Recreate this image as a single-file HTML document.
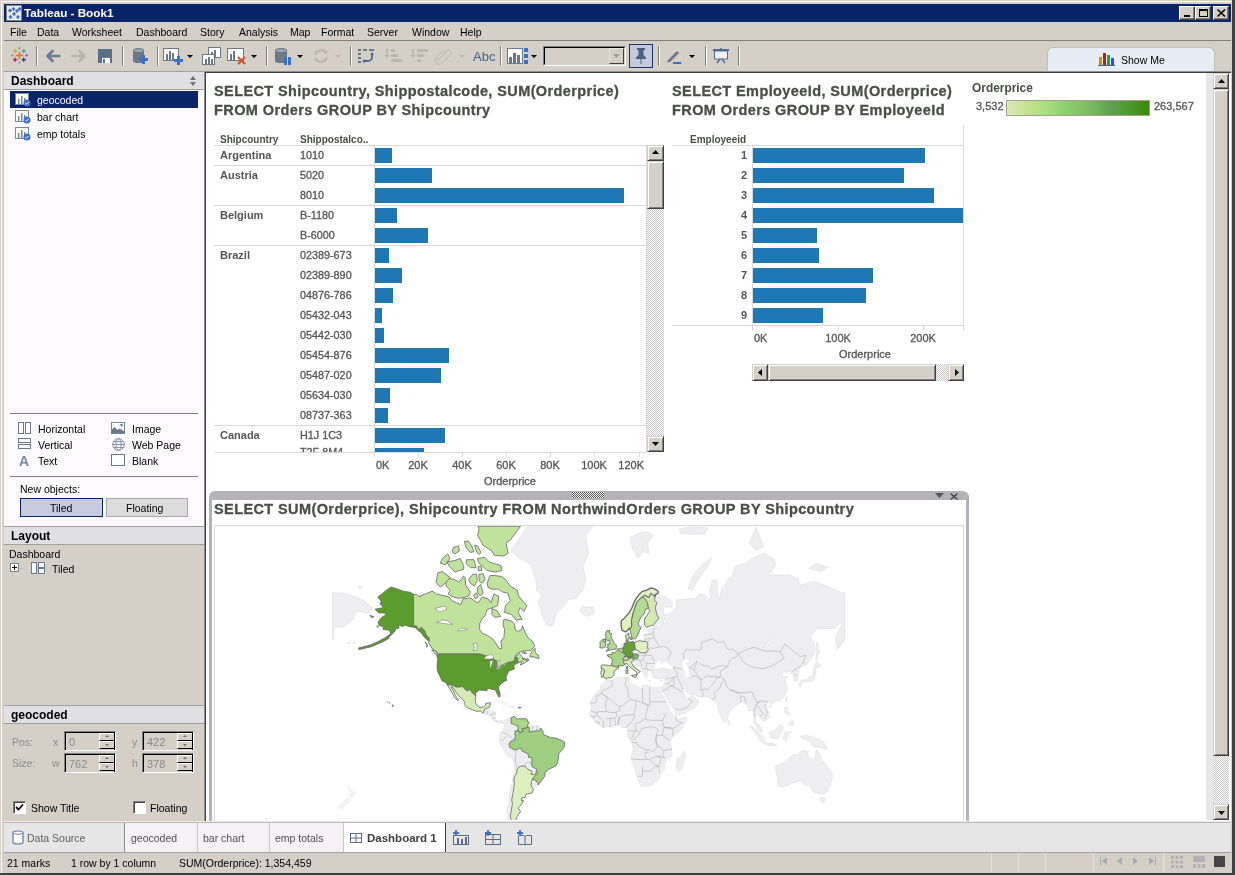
<!DOCTYPE html>
<html><head><meta charset="utf-8">
<style>
*{margin:0;padding:0;box-sizing:border-box}
html,body{will-change:transform;width:1235px;height:875px;overflow:hidden;background:#d4d0c8;font-family:"Liberation Sans",sans-serif;font-size:10.5px;color:#000}
.a{position:absolute}
.t{position:absolute;white-space:nowrap;line-height:1}
svg{position:absolute;overflow:visible}
#title{left:4px;top:4px;width:1227px;height:18px;background:#0a246a}
.wb{position:absolute;top:2px;width:16px;height:14px;background:#d4d0c8;border-top:1px solid #fff;border-left:1px solid #fff;border-right:1px solid #404040;border-bottom:1px solid #404040;box-shadow:inset -1px -1px 0 #808080}
.sep{position:absolute;top:46px;width:2px;height:20px;border-left:1px solid #808080;border-right:1px solid #fff}
.hdr{position:absolute;left:4px;width:200px;height:19px;background:#e0dfe3;border-top:1px solid #a0a0a0;border-bottom:1px solid #a0a0a0}
.hdr span{position:absolute;left:7px;top:3px;font-weight:bold;font-size:12px;line-height:1}
.tab{position:absolute;top:823px;height:29px;border-right:1px solid #c8c8c8;background:#f5f1f5;color:#505050}
.tab span{position:absolute;top:10px;line-height:1;white-space:nowrap}
.inp{position:absolute;width:52px;height:20px;background:#d4d0c8;border-top:1px solid #808080;border-left:1px solid #808080;border-right:1px solid #fff;border-bottom:1px solid #fff;color:#8a8a8a}
.inp:before{content:"";position:absolute;left:0;top:0;right:0;bottom:0;border-top:1px solid #000;border-left:1px solid #000;border-right:1px solid #000}
.inp span{position:absolute;left:4px;top:5px;line-height:1;font-size:11px}
.spin{position:absolute;left:34px;top:1px;width:15px;height:16px}
.spin:before,.spin:after{content:"";position:absolute;left:0;width:15px;height:8px;box-sizing:border-box;border-top:1px solid #fff;border-left:1px solid #fff;border-bottom:1px solid #000;background:#d4d0c8}
.spin:before{top:0}.spin:after{top:8px}
.spin i{position:absolute;left:6px;width:0;height:0;border-left:2px solid transparent;border-right:2px solid transparent;z-index:1}
.spin i.u{top:2px;border-bottom:2px solid #707070}.spin i.d{top:11px;border-top:2px solid #707070}
.sbb{position:absolute;background:#d4d0c8;border-top:1px solid #d4d0c8;border-left:1px solid #d4d0c8;border-right:1px solid #404040;border-bottom:1px solid #404040;box-shadow:inset 1px 1px 0 #fff,inset -1px -1px 0 #808080}
.gl{position:absolute;color:#8c8c8c;line-height:1;white-space:nowrap}
</style></head><body>
<!-- window frame -->
<div class="a" style="left:0;top:0;width:1235px;height:875px;background:#d4d0c8;border-top:1px solid #d4d0c8;border-left:1px solid #d4d0c8;"></div>
<div class="a" style="left:1px;top:1px;width:1233px;height:873px;border-top:1px solid #fff;border-left:1px solid #fff;border-right:1px solid #808080;border-bottom:1px solid #808080"></div>
<div class="a" style="left:1232px;top:0;width:3px;height:875px;background:#404040"></div>
<div class="a" style="left:0;top:873px;width:1235px;height:2px;background:#404040"></div>

<!-- title bar -->
<div id="title" class="a">
  <div class="a" style="left:2px;top:1px;width:16px;height:16px;background:#e8e8e8;border:1px solid #808080"></div>
  <svg style="left:3px;top:2px" width="14" height="14" viewBox="0 0 14 14"><rect x="1.2" y="3.9" width="3.6" height="1.2" fill="#1f5fc8"/><rect x="2.4" y="2.7" width="1.2" height="3.6" fill="#1f5fc8"/><rect x="4.7" y="2.4" width="3.6" height="1.2" fill="#1f5fc8"/><rect x="5.9" y="1.2" width="1.2" height="3.6" fill="#1f5fc8"/><rect x="8.2" y="4.4" width="3.6" height="1.2" fill="#1f5fc8"/><rect x="9.4" y="3.2" width="1.2" height="3.6" fill="#1f5fc8"/><rect x="10.7" y="2.4" width="3.6" height="1.2" fill="#1f5fc8"/><rect x="11.9" y="1.2" width="1.2" height="3.6" fill="#1f5fc8"/><rect x="5.2" y="7.4" width="3.6" height="1.2" fill="#1f5fc8"/><rect x="6.4" y="6.2" width="1.2" height="3.6" fill="#1f5fc8"/><rect x="1.7" y="10.4" width="3.6" height="1.2" fill="#1f5fc8"/><rect x="2.9" y="9.2" width="1.2" height="3.6" fill="#1f5fc8"/><rect x="9.2" y="10.4" width="3.6" height="1.2" fill="#1f5fc8"/><rect x="10.4" y="9.2" width="1.2" height="3.6" fill="#1f5fc8"/></svg>
  <div class="t" style="left:20px;top:3px;color:#fff;font-weight:bold;font-size:11.7px">Tableau - Book1</div>
  <div class="wb" style="left:1175px"><div class="a" style="left:4px;top:8px;width:6px;height:2px;background:#000"></div></div>
  <div class="wb" style="left:1191px"><div class="a" style="left:3px;top:2px;width:9px;height:8px;border:1px solid #000;border-top-width:2px"></div></div>
  <div class="wb" style="left:1209px"><svg style="left:3px;top:2px" width="9" height="8" viewBox="0 0 9 8"><path d="M0.5 0.5L8 7.5M8 0.5L0.5 7.5" stroke="#000" stroke-width="1.6"/></svg></div>
</div>

<!-- menu -->
<div class="t" style="left:10px;top:27px">File</div>
<div class="t" style="left:37px;top:27px">Data</div>
<div class="t" style="left:72px;top:27px">Worksheet</div>
<div class="t" style="left:136px;top:27px">Dashboard</div>
<div class="t" style="left:200px;top:27px">Story</div>
<div class="t" style="left:239px;top:27px">Analysis</div>
<div class="t" style="left:290px;top:27px">Map</div>
<div class="t" style="left:321px;top:27px">Format</div>
<div class="t" style="left:367px;top:27px">Server</div>
<div class="t" style="left:412px;top:27px">Window</div>
<div class="t" style="left:460px;top:27px">Help</div>
<div class="a" style="left:4px;top:40px;width:1227px;height:1px;background:#808080"></div>

<!-- toolbar placeholder -->
<!-- tableau logo -->
<svg style="left:10px;top:46px" width="19" height="19" viewBox="0 0 19 19"><rect x="5.8" y="8.55" width="7.2" height="1.7" fill="#e8762d"/><rect x="8.55" y="5.8" width="1.7" height="7.2" fill="#e8762d"/><rect x="2.9" y="4.45" width="4.4" height="1.3" fill="#eb9a38"/><rect x="4.45" y="2.9" width="1.3" height="4.4" fill="#eb9a38"/><rect x="11.5" y="4.45" width="4.4" height="1.3" fill="#5b97a8"/><rect x="13.05" y="2.9" width="1.3" height="4.4" fill="#5b97a8"/><rect x="2.9" y="13.05" width="4.4" height="1.3" fill="#c72037"/><rect x="4.45" y="11.5" width="1.3" height="4.4" fill="#c72037"/><rect x="11.5" y="13.05" width="4.4" height="1.3" fill="#1f447e"/><rect x="13.05" y="11.5" width="1.3" height="4.4" fill="#1f447e"/><rect x="8" y="1.7" width="2.8" height="1" fill="#7ba3b0"/><rect x="8.9" y="0.8" width="1" height="2.8" fill="#7ba3b0"/><rect x="8" y="16.1" width="2.8" height="1" fill="#9aa0c8"/><rect x="8.9" y="15.2" width="1" height="2.8" fill="#9aa0c8"/><rect x="0.8" y="8.9" width="2.8" height="1" fill="#7ba3b0"/><rect x="1.7" y="8" width="1" height="2.8" fill="#7ba3b0"/><rect x="15.2" y="8.9" width="2.8" height="1" fill="#6a6ea0"/><rect x="16.1" y="8" width="1" height="2.8" fill="#6a6ea0"/></svg>
<div class="sep" style="left:36px"></div>
<svg style="left:45px;top:49px" width="16" height="14" viewBox="0 0 16 14"><path d="M14.5 7H3M7.5 2L2.5 7l5 5" stroke="#6a7d92" stroke-width="2.6" fill="none" stroke-linecap="round" stroke-linejoin="round"/></svg>
<svg style="left:71px;top:49px" width="16" height="14" viewBox="0 0 16 14"><path d="M1.5 7H13M8.5 2l5 5-5 5" stroke="#b8b4ac" stroke-width="2.6" fill="none" stroke-linecap="round" stroke-linejoin="round"/></svg>
<svg style="left:98px;top:49px" width="14" height="14" viewBox="0 0 14 14"><rect x="0" y="0" width="14" height="14" fill="#5a6e86"/><rect x="4" y="9" width="8" height="5" fill="#fff"/><rect x="5" y="10" width="2" height="4" fill="#5a6e86"/></svg>
<div class="sep" style="left:122px"></div>
<svg style="left:133px;top:48px" width="15" height="17" viewBox="0 0 15 17"><path d="M0 2.5Q0 0 5.5 0Q11 0 11 2.5V13Q11 15 5.5 15Q0 15 0 13Z" fill="#6a7888"/><ellipse cx="5.5" cy="2.5" rx="4.5" ry="1.6" fill="#9aa6b4"/><path d="M9 7h3v3h3v3h-3v3H9v-3H6v-3h3z" fill="#3a6fc4"/></svg>
<div class="sep" style="left:157px"></div>
<svg style="left:163px;top:48px" width="21" height="17" viewBox="0 0 21 17"><rect x="0.5" y="0.5" width="15" height="12" fill="#fff" stroke="#6a7888"/><rect x="3" y="6" width="2" height="6" fill="#6a7888"/><rect x="6" y="3" width="2" height="9" fill="#6a7888"/><rect x="9" y="5" width="2" height="7" fill="#6a7888"/><path d="M14 8h3v3h3v3h-3v3h-3v-3h-3v-3h3z" fill="#3a6fc4"/></svg>
<svg style="left:187px;top:55px" width="6" height="3" viewBox="0 0 6 3"><path d="M0 0h6L3 3z" fill="#000"/></svg>
<svg style="left:202px;top:47px" width="19" height="18" viewBox="0 0 19 18"><rect x="6.5" y="0.5" width="12" height="10" fill="#fff" stroke="#6a7888"/><rect x="9" y="5" width="2" height="5" fill="#6a7888"/><rect x="12" y="3" width="2" height="7" fill="#6a7888"/><rect x="0.5" y="7.5" width="12" height="10" fill="#fff" stroke="#6a7888"/><rect x="3" y="12" width="2" height="5" fill="#6a7888"/><rect x="6" y="10" width="2" height="7" fill="#6a7888"/><rect x="9" y="12" width="2" height="5" fill="#6a7888"/></svg>
<svg style="left:227px;top:48px" width="20" height="17" viewBox="0 0 20 17"><rect x="0.5" y="0.5" width="16" height="12" fill="#fff" stroke="#6a7888"/><rect x="3" y="6" width="2" height="6" fill="#6a7888"/><rect x="6" y="3" width="2" height="9" fill="#6a7888"/><path d="M11 9l7 7M18 9l-7 7" stroke="#d0502a" stroke-width="2"/></svg>
<svg style="left:251px;top:55px" width="6" height="3" viewBox="0 0 6 3"><path d="M0 0h6L3 3z" fill="#000"/></svg>
<div class="sep" style="left:266px"></div>
<svg style="left:275px;top:48px" width="17" height="17" viewBox="0 0 17 17"><path d="M0 2.5Q0 0 6 0Q12 0 12 2.5V13Q12 15 6 15Q0 15 0 13Z" fill="#6a7888"/><ellipse cx="6" cy="2.5" rx="5" ry="1.6" fill="#9aa6b4"/><rect x="9" y="9" width="3" height="8" fill="#3a6fc4"/><rect x="13" y="9" width="3" height="8" fill="#3a6fc4"/></svg>
<svg style="left:297px;top:55px" width="6" height="3" viewBox="0 0 6 3"><path d="M0 0h6L3 3z" fill="#000"/></svg>
<svg style="left:313px;top:48px" width="16" height="16" viewBox="0 0 16 16"><path d="M2.5 7A5.5 5.5 0 0 1 12.5 4.5M13.5 9A5.5 5.5 0 0 1 3.5 11.5" stroke="#bcb8b0" stroke-width="2.4" fill="none"/><path d="M10 2l4.5 1-1 4.5zM6 14l-4.5-1 1-4.5z" fill="#bcb8b0"/></svg>
<svg style="left:335px;top:55px" width="6" height="3" viewBox="0 0 6 3"><path d="M0 0h6L3 3z" fill="#bcb8b0"/></svg>
<div class="sep" style="left:350px"></div>
<svg style="left:358px;top:49px" width="17" height="16" viewBox="0 0 17 16"><g fill="#6a7888"><rect x="0" y="0" width="3" height="2"/><rect x="5" y="0" width="4" height="2"/><rect x="11" y="0" width="5" height="2"/><rect x="0" y="4" width="3" height="2"/><rect x="0" y="8" width="3" height="2"/><rect x="0" y="12" width="3" height="2"/></g><path d="M14 5v3a4 4 0 0 1-4 4H6" stroke="#4a6a96" stroke-width="1.8" fill="none"/><path d="M12 6l2-3 2 3zM7 10l-3 2 3 2z" fill="#4a6a96"/></svg>
<svg style="left:384px;top:49px" width="19" height="15" viewBox="0 0 19 15"><g fill="#bcb8b0"><rect x="7" y="0" width="4" height="3"/><rect x="7" y="5" width="7" height="3"/><rect x="7" y="10" width="11" height="3"/><path d="M2 0h2v6h2L3 9 0 6h2z"/></g></svg>
<svg style="left:410px;top:49px" width="19" height="15" viewBox="0 0 19 15"><g fill="#bcb8b0"><rect x="7" y="0" width="11" height="3"/><rect x="7" y="5" width="7" height="3"/><rect x="7" y="10" width="4" height="3"/><path d="M2 0h2v6h2L3 9 0 6h2z"/></g></svg>
<svg style="left:435px;top:49px" width="17" height="15" viewBox="0 0 17 15"><path d="M3 12L13 2a2.5 2.5 0 0 1 3.5 3.5L7 15a4 4 0 0 1-5.5-5.5L10 1" stroke="#c4c0b8" stroke-width="1.3" fill="none" transform="translate(-0.5,-0.5)"/></svg>
<svg style="left:459px;top:55px" width="6" height="3" viewBox="0 0 6 3"><path d="M0 0h6L3 3z" fill="#bcb8b0"/></svg>
<div class="t" style="left:473px;top:50px;color:#4a6080;font-size:13px">Abc</div>
<div class="sep" style="left:500px"></div>
<svg style="left:507px;top:48px" width="21" height="16" viewBox="0 0 21 16"><rect x="0.5" y="0.5" width="15" height="15" fill="#fff" stroke="#6a7888"/><rect x="2" y="9" width="3" height="6" fill="#6a7888"/><rect x="6" y="5" width="3" height="10" fill="#6a7888"/><rect x="10" y="7" width="3" height="8" fill="#6a7888"/><g fill="#3a6fc4"><rect x="17" y="0" width="4" height="4"/><rect x="17" y="6" width="4" height="4"/><rect x="17" y="12" width="4" height="4"/></g></svg>
<svg style="left:531px;top:55px" width="6" height="3" viewBox="0 0 6 3"><path d="M0 0h6L3 3z" fill="#000"/></svg>
<!-- combo -->
<div class="a" style="left:543px;top:46px;width:83px;height:20px;background:#d4d0c8;border-top:1px solid #808080;border-left:1px solid #808080;border-right:1px solid #fff;border-bottom:1px solid #fff"></div>
<div class="a" style="left:544px;top:47px;width:81px;height:18px;border-top:1px solid #000;border-left:1px solid #000;border-right:1px solid #d4d0c8;border-bottom:1px solid #d4d0c8"></div>
<div class="a" style="left:609px;top:48px;width:15px;height:16px;background:#d4d0c8;border-top:1px solid #e4e4e4;border-left:1px solid #e4e4e4;border-right:1px solid #404040;border-bottom:1px solid #404040"></div>
<svg style="left:613px;top:54px" width="7" height="4" viewBox="0 0 7 4"><path d="M0 0h7L3.5 4z" fill="#a0a0a0"/></svg>
<!-- pin -->
<div class="a" style="left:629px;top:44px;width:24px;height:24px;background:#c4cadc;border:1px solid #1a3070"></div>
<svg style="left:634px;top:48px" width="14" height="16" viewBox="0 0 14 16"><path d="M3 0h8v2H9.5v5l2.5 2.5V11H2V9.5L4.5 7V2H3z" fill="#4a6080"/><rect x="6.5" y="11" width="1" height="5" fill="#4a6080"/></svg>
<div class="sep" style="left:658px"></div>
<svg style="left:666px;top:49px" width="17" height="15" viewBox="0 0 17 15"><path d="M2 11L11 2l2 2-9 9-3 0.5z" fill="#6a7888"/><rect x="7" y="13" width="8" height="2" fill="#3a6fc4"/></svg>
<svg style="left:689px;top:55px" width="6" height="3" viewBox="0 0 6 3"><path d="M0 0h6L3 3z" fill="#000"/></svg>
<div class="sep" style="left:705px"></div>
<svg style="left:713px;top:48px" width="16" height="16" viewBox="0 0 16 16"><rect x="0" y="1" width="16" height="2" fill="#4a6a96"/><rect x="1.5" y="3" width="13" height="8" fill="#f4f0f4" stroke="#4a6a96"/><path d="M8 1V0M4 15l3-4M12 15l-3-4" stroke="#4a6a96" stroke-width="1.4"/></svg>
<div class="sep" style="left:738px"></div>


<!-- Show Me tab -->
<div class="a" style="left:1047px;top:47px;width:168px;height:25px;background:#e6edf5;border:1px solid #b9c4b9;border-bottom:none;border-radius:6px 6px 0 0"></div>
<svg style="left:1098px;top:53px" width="18" height="13" viewBox="0 0 18 13"><rect x="1" y="4" width="3" height="8" fill="#c8901a"/><rect x="5" y="0" width="3" height="12" fill="#a02a0a"/><rect x="9" y="2" width="3" height="10" fill="#2aa02a"/><rect x="13" y="5" width="3" height="7" fill="#2a4aff"/><rect x="0" y="12" width="17" height="1" fill="#506080"/></svg>
<div class="t" style="left:1121px;top:55px">Show Me</div>

<!-- left panel -->
<div class="hdr" style="top:71px"><span>Dashboard</span></div>
<svg style="left:190px;top:76px" width="6" height="10" viewBox="0 0 6 10"><path d="M0 4h6L3 0zM0 6h6L3 10z" fill="#707070"/></svg>
<div class="a" style="left:4px;top:90px;width:200px;height:436px;background:#fdfafd"></div>
<div class="a" style="left:10px;top:91px;width:188px;height:17px;background:#0a246a"></div>
<!-- sheet icons -->
<svg style="left:15px;top:93px" width="16" height="14" viewBox="0 0 16 14"><rect x="0.5" y="0.5" width="13" height="11" fill="#fff" stroke="#7a8898"/><rect x="3" y="6" width="1.5" height="5.5" fill="#7a8898"/><rect x="6" y="3" width="1.5" height="8.5" fill="#7a8898"/><rect x="9" y="5" width="1.5" height="6.5" fill="#7a8898"/><circle cx="12" cy="10" r="3.5" fill="#3a70c8"/><path d="M10.3 10l1.2 1.2 2.2-2.4" stroke="#fff" stroke-width="1" fill="none"/></svg>
<svg style="left:15px;top:110px" width="16" height="14" viewBox="0 0 16 14"><rect x="0.5" y="0.5" width="13" height="11" fill="#fff" stroke="#7a8898"/><rect x="3" y="6" width="1.5" height="5.5" fill="#7a8898"/><rect x="6" y="3" width="1.5" height="8.5" fill="#7a8898"/><rect x="9" y="5" width="1.5" height="6.5" fill="#7a8898"/><circle cx="12" cy="10" r="3.5" fill="#3a70c8"/><path d="M10.3 10l1.2 1.2 2.2-2.4" stroke="#fff" stroke-width="1" fill="none"/></svg>
<svg style="left:15px;top:127px" width="16" height="14" viewBox="0 0 16 14"><rect x="0.5" y="0.5" width="13" height="11" fill="#fff" stroke="#7a8898"/><rect x="3" y="6" width="1.5" height="5.5" fill="#7a8898"/><rect x="6" y="3" width="1.5" height="8.5" fill="#7a8898"/><rect x="9" y="5" width="1.5" height="6.5" fill="#7a8898"/><circle cx="12" cy="10" r="3.5" fill="#3a70c8"/><path d="M10.3 10l1.2 1.2 2.2-2.4" stroke="#fff" stroke-width="1" fill="none"/></svg>
<div class="t" style="left:37px;top:95px;color:#fff">geocoded</div>
<div class="t" style="left:37px;top:112px">bar chart</div>
<div class="t" style="left:37px;top:129px">emp totals</div>
<div class="a" style="left:10px;top:413px;width:188px;height:1px;background:#808080"></div>
<!-- objects -->
<svg style="left:18px;top:422px" width="14" height="12" viewBox="0 0 14 12"><rect x="0.5" y="0.5" width="5" height="11" fill="none" stroke="#6a7888"/><rect x="7.5" y="0.5" width="5" height="11" fill="none" stroke="#6a7888"/></svg>
<svg style="left:18px;top:438px" width="14" height="12" viewBox="0 0 14 12"><rect x="0.5" y="0.5" width="12" height="4" fill="none" stroke="#6a7888"/><rect x="0.5" y="6.5" width="12" height="4" fill="none" stroke="#6a7888"/></svg>
<div class="t" style="left:19px;top:454px;color:#7a8898;font-weight:bold;font-size:14px">A</div>
<div class="t" style="left:38px;top:424px">Horizontal</div>
<div class="t" style="left:38px;top:440px">Vertical</div>
<div class="t" style="left:38px;top:456px">Text</div>
<svg style="left:111px;top:422px" width="14" height="12" viewBox="0 0 14 12"><rect x="0" y="0" width="14" height="12" fill="#fff" stroke="#7a8898" stroke-width="0"/><rect x="0.5" y="0.5" width="13" height="11" fill="none" stroke="#7a8898"/><path d="M0.5 11.5V8l3-3 3 3 2-1.5 5 3v2z" fill="#6a7888"/><circle cx="10.5" cy="3" r="1.2" fill="#3a70c8"/></svg>
<svg style="left:112px;top:438px" width="13" height="13" viewBox="0 0 13 13"><g fill="none" stroke="#7a8898" stroke-width="0.9"><circle cx="6.5" cy="6.5" r="5.8"/><ellipse cx="6.5" cy="6.5" rx="2.6" ry="5.8"/><path d="M0.7 6.5h11.6M1.6 3.6h9.8M1.6 9.4h9.8"/></g></svg>
<svg style="left:111px;top:454px" width="14" height="12" viewBox="0 0 14 12"><rect x="0.5" y="0.5" width="13" height="11" fill="#fff" stroke="#6a7888"/></svg>
<div class="t" style="left:132px;top:424px">Image</div>
<div class="t" style="left:132px;top:440px">Web Page</div>
<div class="t" style="left:132px;top:456px">Blank</div>
<div class="a" style="left:10px;top:476px;width:188px;height:1px;background:#808080"></div>
<div class="t" style="left:20px;top:484px">New objects:</div>
<div class="a" style="left:20px;top:498px;width:83px;height:19px;background:#c6cbdd;border:1px solid #0a246a"></div>
<div class="t" style="left:50px;top:503px">Tiled</div>
<div class="a" style="left:106px;top:498px;width:82px;height:19px;background:#dcdcdc;border:1px solid #a8a8a8"></div>
<div class="t" style="left:126px;top:503px">Floating</div>

<div class="hdr" style="top:526px"><span>Layout</span></div>
<div class="t" style="left:9px;top:549px">Dashboard</div>
<div class="a" style="left:10px;top:563px;width:9px;height:9px;border:1px solid #808080;background:#fff"></div>
<div class="a" style="left:12px;top:567px;width:5px;height:1px;background:#000"></div>
<div class="a" style="left:14px;top:565px;width:1px;height:5px;background:#000"></div>
<div class="a" style="left:14px;top:560px;width:1px;height:3px;border-left:1px dotted #a0a0a0"></div>
<div class="a" style="left:20px;top:568px;width:3px;height:1px;border-top:1px dotted #a0a0a0"></div>
<svg style="left:31px;top:562px" width="14" height="12" viewBox="0 0 14 12"><rect x="0.5" y="0.5" width="5" height="11" fill="#fff" stroke="#6a7888"/><rect x="7.5" y="0.5" width="6" height="5" fill="#fff" stroke="#6a7888"/><rect x="7.5" y="6.5" width="6" height="5" fill="#fff" stroke="#6a7888"/></svg>
<div class="t" style="left:52px;top:564px">Tiled</div>

<div class="hdr" style="top:705px"><span>geocoded</span></div>
<div class="gl" style="left:12px;top:737px">Pos:</div>
<div class="gl" style="left:53px;top:737px">x</div>
<div class="inp" style="left:64px;top:731px"><span>0</span><div class="spin"><i class="u"></i><i class="d"></i></div></div>
<div class="gl" style="left:132px;top:737px">y</div>
<div class="inp" style="left:142px;top:731px"><span>422</span><div class="spin"><i class="u"></i><i class="d"></i></div></div>
<div class="gl" style="left:12px;top:758px">Size:</div>
<div class="gl" style="left:52px;top:758px">w</div>
<div class="inp" style="left:64px;top:753px"><span>762</span><div class="spin"><i class="u"></i><i class="d"></i></div></div>
<div class="gl" style="left:132px;top:758px">h</div>
<div class="inp" style="left:142px;top:753px"><span>378</span><div class="spin"><i class="u"></i><i class="d"></i></div></div>
<div class="a" style="left:13px;top:801px;width:13px;height:13px;background:#fff;border-top:1px solid #808080;border-left:1px solid #808080;border-right:1px solid #fff;border-bottom:1px solid #fff;box-shadow:inset 1px 1px 0 #404040"></div>
<svg style="left:15px;top:803px" width="9" height="9" viewBox="0 0 9 9"><path d="M1 4l2.5 2.5L8 1.5" stroke="#000" stroke-width="1.8" fill="none"/></svg>
<div class="t" style="left:31px;top:803px">Show Title</div>
<div class="a" style="left:133px;top:801px;width:13px;height:13px;background:#fff;border-top:1px solid #808080;border-left:1px solid #808080;border-right:1px solid #fff;border-bottom:1px solid #fff;box-shadow:inset 1px 1px 0 #404040"></div>
<div class="t" style="left:150px;top:803px">Floating</div>



<!-- canvas -->
<div class="a" style="left:205px;top:72px;width:1026px;height:750px;background:#fff;border-left:1px solid #404040;border-top:1px solid #404040"></div><div class="a" style="left:204px;top:71px;width:1027px;height:1px;background:#909090"></div><div class="a" style="left:204px;top:71px;width:1px;height:751px;background:#909090"></div>
<div id="charts"><style>.ti{position:absolute;white-space:nowrap;line-height:1;font-weight:bold;font-size:14.5px;letter-spacing:0.4px;color:#4a4f49;-webkit-text-stroke:0.3px #4a4f49}.hd{position:absolute;white-space:nowrap;line-height:1;font-weight:bold;font-size:10px;color:#4a4f49}.rl{position:absolute;white-space:nowrap;line-height:1;font-weight:bold;font-size:11px;color:#555}.pl{position:absolute;white-space:nowrap;line-height:1;font-size:10.8px;color:#555;-webkit-text-stroke:0.3px #555}.ax{position:absolute;white-space:nowrap;line-height:1;font-size:11px;color:#555;-webkit-text-stroke:0.3px #555}.bar{position:absolute;background:#1f77b4;height:15px}.hl{position:absolute;height:1px;background:#d9d9d9}.vl{position:absolute;width:1px;background:#d9d9d9}</style>
<div class="ti" style="left:214px;top:84px">SELECT Shipcountry, Shippostalcode, SUM(Orderprice)</div>
<div class="ti" style="left:214px;top:103px">FROM Orders GROUP BY Shipcountry</div>
<div class="hd" style="left:220px;top:135px">Shipcountry</div>
<div class="hd" style="left:300px;top:135px">Shippostalco..</div>
<div class="hl" style="left:214px;top:145px;width:432px"></div>
<div class="a" style="left:214px;top:146px;width:432px;height:306px;overflow:hidden">
<div class="rl" style="left:6px;top:4px">Argentina</div>
<div class="pl" style="left:86px;top:4px">1010</div>
<div class="bar" style="left:161px;top:2px;width:17px"></div>
<div class="hl" style="left:0;top:19px;width:432px"></div>
<div class="rl" style="left:6px;top:24px">Austria</div>
<div class="pl" style="left:86px;top:24px">5020</div>
<div class="bar" style="left:161px;top:22px;width:57px"></div>
<div class="pl" style="left:86px;top:44px">8010</div>
<div class="bar" style="left:161px;top:42px;width:249px"></div>
<div class="hl" style="left:0;top:59px;width:432px"></div>
<div class="rl" style="left:6px;top:64px">Belgium</div>
<div class="pl" style="left:86px;top:64px">B-1180</div>
<div class="bar" style="left:161px;top:62px;width:22px"></div>
<div class="pl" style="left:86px;top:84px">B-6000</div>
<div class="bar" style="left:161px;top:82px;width:53px"></div>
<div class="hl" style="left:0;top:99px;width:432px"></div>
<div class="rl" style="left:6px;top:104px">Brazil</div>
<div class="pl" style="left:86px;top:104px">02389-673</div>
<div class="bar" style="left:161px;top:102px;width:14px"></div>
<div class="pl" style="left:86px;top:124px">02389-890</div>
<div class="bar" style="left:161px;top:122px;width:27px"></div>
<div class="pl" style="left:86px;top:144px">04876-786</div>
<div class="bar" style="left:161px;top:142px;width:18px"></div>
<div class="pl" style="left:86px;top:164px">05432-043</div>
<div class="bar" style="left:161px;top:162px;width:7px"></div>
<div class="pl" style="left:86px;top:184px">05442-030</div>
<div class="bar" style="left:161px;top:182px;width:9px"></div>
<div class="pl" style="left:86px;top:204px">05454-876</div>
<div class="bar" style="left:161px;top:202px;width:74px"></div>
<div class="pl" style="left:86px;top:224px">05487-020</div>
<div class="bar" style="left:161px;top:222px;width:66px"></div>
<div class="pl" style="left:86px;top:244px">05634-030</div>
<div class="bar" style="left:161px;top:242px;width:15px"></div>
<div class="pl" style="left:86px;top:264px">08737-363</div>
<div class="bar" style="left:161px;top:262px;width:13px"></div>
<div class="hl" style="left:0;top:279px;width:432px"></div>
<div class="rl" style="left:6px;top:284px">Canada</div>
<div class="pl" style="left:86px;top:284px">H1J 1C3</div>
<div class="bar" style="left:161px;top:282px;width:70px"></div>
<div class="pl" style="left:86px;top:301px">T2F 8M4</div>
<div class="bar" style="left:161px;top:302px;width:49px"></div>
</div>
<div class="vl" style="left:374px;top:146px;height:311px"></div>
<div class="hl" style="left:214px;top:452px;width:432px"></div>
<div class="vl" style="left:374px;top:452px;height:5px"></div>
<div class="vl" style="left:418px;top:452px;height:5px"></div>
<div class="vl" style="left:462px;top:452px;height:5px"></div>
<div class="vl" style="left:506px;top:452px;height:5px"></div>
<div class="vl" style="left:550px;top:452px;height:5px"></div>
<div class="vl" style="left:594px;top:452px;height:5px"></div>
<div class="vl" style="left:639px;top:452px;height:5px"></div>
<div class="ax" style="left:376px;top:460px">0K</div>
<div class="ax" style="left:388px;top:460px;width:60px;text-align:center">20K</div>
<div class="ax" style="left:432px;top:460px;width:60px;text-align:center">40K</div>
<div class="ax" style="left:476px;top:460px;width:60px;text-align:center">60K</div>
<div class="ax" style="left:520px;top:460px;width:60px;text-align:center">80K</div>
<div class="ax" style="left:564px;top:460px;width:60px;text-align:center">100K</div>
<div class="ax" style="left:584px;top:460px;width:60px;text-align:right">120K</div>
<div class="ax" style="left:484px;top:476px">Orderprice</div>
<div class="a" style="left:646px;top:145px;width:18px;height:307px;border-left:1px solid #d9d9d9;background:repeating-conic-gradient(#fff 0 25%,#c8c8c8 0 50%) 0 0/2px 2px"></div>
<div class="sbb" style="left:647px;top:145px;width:17px;height:16px"><svg style="left:4px;top:4px" width="7" height="4" viewBox="0 0 7 4"><path d="M0 4h7L3.5 0z" fill="#000"/></svg></div>
<div class="sbb" style="left:647px;top:161px;width:17px;height:48px"></div>
<div class="sbb" style="left:647px;top:436px;width:17px;height:16px"><svg style="left:4px;top:5px" width="7" height="4" viewBox="0 0 7 4"><path d="M0 0h7L3.5 4z" fill="#000"/></svg></div>
<div class="ti" style="left:672px;top:84px">SELECT EmployeeId, SUM(Orderprice)</div>
<div class="ti" style="left:672px;top:103px">FROM Orders GROUP BY EmployeeId</div>
<div class="hd" style="left:690px;top:135px">Employeeid</div>
<div class="hl" style="left:672px;top:145px;width:291px"></div>
<div class="vl" style="left:963px;top:125px;height:205px"></div>
<div class="vl" style="left:752px;top:146px;height:184px"></div>
<div class="rl" style="left:700px;top:150px;width:47px;text-align:right">1</div>
<div class="bar" style="left:753px;top:148px;width:172px"></div>
<div class="rl" style="left:700px;top:170px;width:47px;text-align:right">2</div>
<div class="bar" style="left:753px;top:168px;width:151px"></div>
<div class="rl" style="left:700px;top:190px;width:47px;text-align:right">3</div>
<div class="bar" style="left:753px;top:188px;width:181px"></div>
<div class="rl" style="left:700px;top:210px;width:47px;text-align:right">4</div>
<div class="bar" style="left:753px;top:208px;width:210px"></div>
<div class="rl" style="left:700px;top:230px;width:47px;text-align:right">5</div>
<div class="bar" style="left:753px;top:228px;width:64px"></div>
<div class="rl" style="left:700px;top:250px;width:47px;text-align:right">6</div>
<div class="bar" style="left:753px;top:248px;width:66px"></div>
<div class="rl" style="left:700px;top:270px;width:47px;text-align:right">7</div>
<div class="bar" style="left:753px;top:268px;width:120px"></div>
<div class="rl" style="left:700px;top:290px;width:47px;text-align:right">8</div>
<div class="bar" style="left:753px;top:288px;width:113px"></div>
<div class="rl" style="left:700px;top:310px;width:47px;text-align:right">9</div>
<div class="bar" style="left:753px;top:308px;width:70px"></div>
<div class="hl" style="left:672px;top:325px;width:291px"></div>
<div class="vl" style="left:752px;top:325px;height:5px"></div>
<div class="vl" style="left:838px;top:325px;height:5px"></div>
<div class="vl" style="left:923px;top:325px;height:5px"></div>
<div class="ax" style="left:754px;top:333px">0K</div>
<div class="ax" style="left:808px;top:333px;width:60px;text-align:center">100K</div>
<div class="ax" style="left:893px;top:333px;width:60px;text-align:center">200K</div>
<div class="ax" style="left:839px;top:349px">Orderprice</div>
<div class="a" style="left:752px;top:364px;width:212px;height:17px;background:repeating-conic-gradient(#fff 0 25%,#c8c8c8 0 50%) 0 0/2px 2px"></div>
<div class="sbb" style="left:752px;top:364px;width:16px;height:17px"><svg style="left:5px;top:4px" width="4" height="7" viewBox="0 0 4 7"><path d="M4 0v7L0 3.5z" fill="#000"/></svg></div>
<div class="sbb" style="left:768px;top:364px;width:168px;height:17px"></div>
<div class="sbb" style="left:948px;top:364px;width:16px;height:17px"><svg style="left:6px;top:4px" width="4" height="7" viewBox="0 0 4 7"><path d="M0 0v7L4 3.5z" fill="#000"/></svg></div>
<div class="a" style="white-space:nowrap;line-height:1;font-weight:bold;font-size:11.9px;color:#4a4f49;left:972px;top:83px">Orderprice</div>
<div class="ax" style="left:976px;top:101px">3,532</div>
<div class="a" style="left:1006px;top:100px;width:144px;height:16px;border:1px solid #a89c98;background:linear-gradient(90deg,#dce9b4 0%,#c4e290 15%,#a8dc80 28%,#8ecf6c 42%,#7cbc60 58%,#60a450 72%,#4e9a30 85%,#3a8a08 100%)"></div>
<div class="ax" style="left:1154px;top:101px">263,567</div>
<div class="a" style="left:1206px;top:73px;width:7px;height:747px;background:#e6e6e6"></div>
<div class="a" style="left:1213px;top:73px;width:16px;height:747px;background:repeating-conic-gradient(#fff 0 25%,#c8c8c8 0 50%) 0 0/2px 2px"></div>
<div class="sbb" style="left:1213px;top:73px;width:16px;height:16px"><svg style="left:4px;top:5px" width="7" height="4" viewBox="0 0 7 4"><path d="M0 4h7L3.5 0z" fill="#000"/></svg></div>
<div class="sbb" style="left:1213px;top:89px;width:16px;height:667px"></div>
<div class="sbb" style="left:1213px;top:804px;width:16px;height:16px"><svg style="left:4px;top:6px" width="7" height="4" viewBox="0 0 7 4"><path d="M0 0h7L3.5 4z" fill="#000"/></svg></div>
<div class="a" style="left:209px;top:491px;width:760px;height:335px;background:#b4b2b6;border-radius:6px 6px 0 0"></div>
<div class="a" style="left:212px;top:500px;width:754px;height:326px;background:#fff"></div>
<div class="a" style="left:572px;top:492px;width:32px;height:6px;background:repeating-conic-gradient(#fff 0 25%,#505050 0 50%) 0 0/2px 2px"></div>
<svg style="left:935px;top:493px" width="9" height="5" viewBox="0 0 9 5"><path d="M0 0h9L4.5 5z" fill="#555"/></svg>
<svg style="left:950px;top:493px" width="8" height="7" viewBox="0 0 8 7"><path d="M0.5 0.5l7 6M7.5 0.5l-7 6" stroke="#444" stroke-width="1.4"/></svg>
<div class="ti" style="left:214px;top:502px">SELECT SUM(Orderprice), Shipcountry FROM NorthwindOrders GROUP BY Shipcountry</div>
<div class="a" style="left:214px;top:525px;width:750px;height:300px;border:1px solid #d8d8d8;background:#fff"></div>
<div id="map"><svg style="left:0;top:0" width="1235" height="875" viewBox="0 0 1235 875"><defs><clipPath id="mc"><rect x="215" y="526" width="748" height="294"/></clipPath></defs><g clip-path="url(#mc)" stroke-linejoin="round"><path d="M550.1 511.9 571.4 502.7 584.2 508.6 597.0 521.2 585.7 535.5 588.5 553.8 582.8 566.0 585.7 579.1 582.8 590.5 575.7 598.6 568.6 599.8 561.5 608.5 556.5 612.9 553.2 625.3 550.1 626.4 545.8 623.8 542.3 616.2 540.1 607.8 538.0 602.4 541.6 594.6 536.6 590.5 535.9 581.5 531.6 566.0 525.9 561.3 518.8 558.3 511.0 550.4 516.0 543.3 524.5 531.3 531.6 519.2 535.9 514.1 550.1 511.9Z" fill="#eeedef" stroke="#d8d8d8" stroke-width="0.5"/><path d="M582.8 606.4 588.5 607.1 592.8 606.8 593.5 609.5 594.9 611.2 592.8 613.6 587.8 616.5 583.5 615.2 582.1 612.9 580.0 611.6 580.0 609.5 582.8 606.4Z" fill="#eeedef" stroke="#d8d8d8" stroke-width="0.5"/><path d="M484.1 710.8 484.7 709.0 487.4 708.3 488.5 707.2 488.7 710.9 491.8 710.9 495.8 712.4 495.3 716.8 494.9 718.3 498.2 721.1 501.0 720.3 504.0 721.6 503.3 723.7 502.6 722.2 500.3 723.4 497.9 722.4 495.1 721.9 492.2 719.8 492.2 718.0 489.7 715.4 487.2 714.8 484.1 714.0 483.0 713.2 484.1 710.8Z" fill="#eeedef" stroke="#d8d8d8" stroke-width="0.5"/><path d="M504.9 721.7 506.7 719.0 508.6 717.8 511.0 717.1 512.7 716.2 511.8 717.4 514.5 716.5 516.7 719.0 520.2 718.8 525.9 718.7 527.3 719.7 527.6 721.9 530.9 724.3 533.0 725.5 535.9 725.6 538.7 726.2 540.7 728.0 543.0 731.4 543.0 734.0 545.1 735.4 550.8 737.6 555.1 738.1 559.3 739.3 564.3 741.8 564.6 744.3 563.9 747.6 560.8 751.2 558.6 754.1 558.3 759.3 557.2 763.0 555.8 766.1 552.2 767.6 548.7 769.2 545.1 772.3 544.7 776.3 541.6 780.4 539.4 783.8 538.2 785.0 536.0 787.0 533.7 787.0 531.0 785.5 532.7 788.1 533.5 789.8 532.0 792.9 525.9 794.3 525.5 797.1 521.7 798.0 521.7 800.9 523.5 800.5 521.2 804.8 518.1 807.8 520.5 811.6 517.0 816.6 515.8 820.0 516.8 823.2 508.9 823.2 507.4 816.4 506.7 809.9 508.9 803.8 509.1 799.0 509.6 791.1 512.4 783.8 512.3 779.6 513.4 774.7 514.4 768.4 514.0 760.5 512.4 758.8 507.4 756.0 505.6 753.4 503.9 750.5 501.0 744.7 498.6 741.8 499.9 739.0 500.3 737.3 498.9 735.4 500.3 732.9 502.0 731.9 503.9 728.3 504.2 724.7 503.3 723.7 504.9 721.7Z" fill="#eeedef" stroke="#d8d8d8" stroke-width="0.5"/><path d="M608.4 665.4 611.5 665.4 612.4 660.2 611.0 657.7 607.7 656.2 607.4 654.7 611.8 654.5 612.3 652.3 614.4 652.7 616.4 651.2 617.7 649.2 619.1 648.3 620.5 646.0 621.2 644.1 624.1 643.6 626.3 642.6 626.3 638.7 625.6 635.4 629.0 633.0 628.7 636.2 629.5 636.9 628.3 639.4 628.0 640.4 629.6 642.4 633.3 641.4 634.4 642.6 637.6 641.2 640.6 640.4 641.8 641.4 644.3 639.4 644.0 635.4 645.4 633.3 648.7 634.3 647.5 628.9 653.9 628.1 657.1 626.7 651.1 625.5 646.7 627.3 644.4 624.7 644.5 619.0 649.9 610.9 648.5 608.5 645.4 609.2 644.3 613.9 641.0 617.1 638.6 622.3 638.4 625.3 641.0 627.3 637.6 634.9 636.6 637.2 634.3 638.9 632.3 638.9 631.0 633.8 630.0 629.2 629.0 628.1 628.6 629.5 625.8 631.9 622.2 630.3 621.2 626.7 621.2 620.8 624.1 618.4 629.0 612.9 631.9 607.8 634.0 602.4 636.1 598.6 639.0 594.6 641.8 591.7 646.8 590.1 651.1 587.9 654.6 588.8 658.2 591.3 661.0 595.4 666.0 596.6 672.4 602.4 671.7 607.1 663.9 607.1 663.2 612.9 666.7 615.2 671.0 612.9 676.7 607.1 676.7 599.4 679.5 599.8 689.5 598.6 695.2 598.6 699.4 593.8 705.1 595.4 711.5 599.8 709.4 592.6 712.2 580.1 717.2 580.1 717.2 590.5 719.3 600.5 722.2 587.4 726.5 582.4 728.6 578.1 731.9 576.6 735.3 566.5 745.4 563.1 757.3 555.7 764.1 553.1 774.4 559.5 776.1 564.8 769.1 575.1 789.6 575.1 798.1 578.6 799.8 585.2 813.2 581.5 827.4 586.1 841.7 592.6 844.5 592.7 844.5 639.9 844.2 640.4 839.5 647.1 836.7 649.4 836.0 644.8 835.3 637.4 837.4 632.7 841.7 625.3 840.2 622.3 834.5 628.7 828.9 628.7 817.5 628.7 810.4 636.2 813.9 643.6 814.6 644.8 813.9 654.9 810.4 659.1 806.1 665.2 801.1 666.5 798.6 670.0 798.1 677.3 797.9 680.5 794.0 681.7 794.0 676.2 791.2 672.2 787.6 670.9 786.5 673.9 787.6 670.3 784.1 672.2 781.9 673.7 781.6 675.0 783.3 676.9 788.3 676.6 784.8 679.9 786.2 685.9 787.6 687.9 786.9 691.7 784.1 696.5 779.8 700.5 775.5 701.6 771.3 704.5 770.1 702.7 767.7 702.7 765.6 704.7 764.1 707.2 768.8 712.0 769.4 717.5 765.6 720.4 763.1 721.7 763.4 719.0 760.6 718.3 759.9 716.5 757.0 714.6 755.2 719.0 757.0 724.0 761.3 728.0 762.3 732.0 761.3 732.2 757.7 730.0 756.7 726.2 753.9 722.6 754.2 716.8 753.1 710.2 748.2 710.9 748.5 707.2 745.4 703.4 744.7 700.8 742.8 701.9 740.7 702.2 737.7 704.2 735.0 706.0 731.1 709.9 728.2 714.6 727.9 719.3 724.3 722.4 722.6 719.7 720.5 715.6 718.6 710.9 717.6 706.5 717.4 702.7 713.7 701.1 711.5 699.6 709.4 697.4 705.1 696.8 701.6 696.9 697.3 696.5 695.2 694.1 690.9 694.9 687.3 692.7 685.2 688.9 682.4 689.2 683.8 693.3 685.9 697.3 687.3 698.8 693.7 695.4 694.5 698.0 699.1 701.1 695.9 706.5 692.3 709.5 688.1 711.2 683.1 713.9 676.0 715.8 674.5 710.2 671.0 705.0 666.7 698.0 663.9 692.5 663.0 692.5 663.7 690.1 662.7 687.1 664.6 683.4 665.3 679.4 665.2 677.6 660.3 678.9 656.8 678.5 653.2 677.3 651.8 672.8 651.4 671.3 655.3 670.0 661.0 668.1 665.3 668.6 671.0 670.0 673.1 669.0 673.4 667.1 668.1 663.2 666.7 661.6 668.9 659.1 664.6 661.6 661.7 663.2 660.3 661.2 658.2 658.9 656.8 661.2 654.9 663.6 653.6 667.5 655.2 669.4 651.4 670.5 647.5 670.9 648.2 675.5 645.4 678.2 644.7 675.5 642.8 672.4 641.8 670.0 640.4 667.1 636.9 665.2 634.7 661.6 633.4 660.8 631.6 661.6 631.9 663.8 634.0 667.1 636.9 669.0 640.4 671.5 638.6 672.8 637.6 673.7 636.4 675.5 637.0 673.9 636.4 671.8 634.0 670.3 631.9 668.6 629.0 666.1 626.6 663.4 624.8 664.6 622.6 665.9 618.4 665.5 618.7 668.1 615.2 670.0 613.7 672.8 614.4 674.2 613.1 676.2 611.1 677.8 607.7 677.8 606.1 679.1 605.1 677.6 603.6 676.9 601.3 677.3 601.6 674.6 600.6 674.0 601.4 670.0 600.9 666.1 602.7 664.8 608.4 665.4ZM358.1 597.4 366.6 602.4 372.7 607.5 368.1 613.6 358.1 611.2 355.3 614.5 353.8 619.3 343.9 626.7 335.3 627.3 333.2 633.5 333.9 637.4 332.5 639.9 332.5 592.7 343.9 593.0 358.1 597.4Z" fill="#eeedef" stroke="#d8d8d8" stroke-width="0.5"/><path d="M611.3 680.6 615.5 678.2 619.1 677.6 626.2 677.3 628.6 676.9 629.7 677.6 629.0 679.9 628.3 682.2 630.5 684.1 635.7 685.4 641.1 688.7 642.5 687.6 642.5 685.6 646.8 684.9 649.7 686.6 655.3 687.8 659.9 687.1 662.7 687.1 663.7 690.1 661.7 694.1 664.6 698.8 667.0 703.4 668.9 708.0 670.3 711.7 673.1 714.6 675.7 716.8 677.4 719.1 686.8 717.0 686.6 719.1 683.1 726.9 679.5 731.2 673.1 736.4 669.9 740.7 670.3 744.0 671.7 749.0 671.8 756.3 666.4 760.0 664.2 765.3 664.6 769.2 660.7 772.3 660.3 776.3 656.8 780.9 653.2 784.1 650.4 785.5 646.1 785.5 642.5 786.9 640.1 785.5 639.4 782.9 635.9 773.9 634.7 767.3 630.9 759.0 631.9 753.4 633.6 749.3 631.6 742.5 627.6 736.8 627.6 732.6 628.0 729.0 626.2 727.6 622.6 727.9 620.5 725.0 616.2 725.2 611.3 727.2 607.7 726.6 603.4 727.7 597.7 724.2 595.2 721.9 592.8 718.5 590.2 716.1 589.2 712.9 590.6 710.9 591.2 707.2 589.9 703.4 592.8 698.0 594.9 694.1 597.7 692.2 600.2 689.4 600.6 685.1 604.4 682.5 605.7 679.4 611.3 680.6Z" fill="#eeedef" stroke="#d8d8d8" stroke-width="0.5"/><path d="M685.9 756.3 684.5 759.3 683.1 763.8 680.9 770.4 678.1 771.5 676.0 766.1 677.2 761.5 676.7 758.5 680.2 756.8 682.4 753.4 684.2 751.2 685.9 756.3Z" fill="#eeedef" stroke="#d8d8d8" stroke-width="0.5"/><path d="M776.2 765.8 780.5 764.1 787.6 760.8 789.0 757.8 792.6 755.6 794.7 754.1 798.3 755.4 799.0 751.9 803.3 750.5 808.9 751.2 807.2 752.6 808.7 756.8 813.2 759.6 815.3 757.8 815.3 752.6 816.8 749.3 820.6 755.6 821.7 760.8 826.0 764.6 831.4 771.5 832.6 775.5 831.7 780.4 827.4 791.6 822.5 794.3 818.9 793.4 813.2 792.1 810.4 788.1 810.1 783.8 806.1 786.3 801.1 781.2 797.6 781.4 790.5 783.8 787.6 785.5 781.9 787.2 777.7 785.5 777.7 778.8 776.2 773.1 775.5 766.1 776.2 765.8Z" fill="#eeedef" stroke="#d8d8d8" stroke-width="0.5"/><path d="M825.0 797.8 824.3 802.3 821.7 803.0 820.0 799.9 819.8 797.5 825.0 797.8Z" fill="#eeedef" stroke="#d8d8d8" stroke-width="0.5"/><path d="M350.3 788.6 352.4 791.6 356.0 792.0 355.1 794.7 353.5 796.2 351.4 799.2 350.4 795.8 349.3 794.7 350.6 792.5 348.1 787.2 347.7 786.2 350.3 788.6Z" fill="#f2f2f3" stroke="#e6e6e6" stroke-width="0.4"/><path d="M350.0 799.4 348.1 803.4 345.6 804.8 342.5 809.1 338.9 807.8 339.3 805.8 341.7 803.8 345.3 799.9 347.7 797.1 350.0 799.4Z" fill="#f2f2f3" stroke="#e6e6e6" stroke-width="0.4"/><path d="M752.8 726.6 757.0 731.2 761.7 735.4 764.9 738.3 764.6 742.3 762.7 742.4 759.2 739.7 757.0 735.4 754.2 731.6 749.6 726.0 752.8 726.6Z" fill="#eeedef" stroke="#d8d8d8" stroke-width="0.5"/><path d="M764.9 742.5 768.4 743.6 772.0 743.3 776.9 745.1 773.4 745.8 767.7 745.1 763.9 743.8 763.7 743.7 764.9 742.5Z" fill="#eeedef" stroke="#d8d8d8" stroke-width="0.5"/><path d="M772.0 731.4 774.8 729.7 778.4 726.9 780.5 724.0 783.3 726.9 781.9 732.6 779.1 734.0 779.8 736.8 776.9 739.0 771.0 738.3 769.8 735.4 769.1 731.9 772.0 731.4Z" fill="#eeedef" stroke="#d8d8d8" stroke-width="0.5"/><path d="M785.5 732.2 791.9 731.9 786.2 733.3 789.0 735.1 787.6 736.1 786.9 740.4 785.5 741.8 785.2 738.3 783.3 739.0 784.1 734.7 784.1 733.3 785.5 732.2Z" fill="#eeedef" stroke="#d8d8d8" stroke-width="0.5"/><path d="M804.7 735.4 809.7 736.1 814.6 737.7 819.6 739.4 823.9 742.5 827.4 749.0 823.2 748.3 818.2 746.9 814.6 747.1 811.8 745.4 809.7 741.1 805.4 739.7 801.8 738.0 800.4 736.1 804.7 735.4Z" fill="#eeedef" stroke="#d8d8d8" stroke-width="0.5"/><path d="M788.3 707.5 787.6 710.9 790.5 715.4 786.9 714.2 785.5 713.2 784.5 710.9 784.8 707.2 788.3 707.5Z" fill="#eeedef" stroke="#d8d8d8" stroke-width="0.5"/><path d="M792.6 720.0 794.0 724.0 792.6 725.7 790.5 724.7 787.6 724.0 792.6 720.0Z" fill="#eeedef" stroke="#d8d8d8" stroke-width="0.5"/><path d="M801.8 679.9 806.8 679.9 808.5 677.3 812.5 675.5 813.2 670.9 815.3 669.0 816.1 672.8 814.3 678.2 813.2 680.8 808.9 681.5 806.1 681.7 800.3 682.5 801.8 679.9Z" fill="#eeedef" stroke="#d8d8d8" stroke-width="0.5"/><path d="M815.3 665.5 816.1 661.2 821.0 665.5 817.5 668.1 813.2 669.0 815.3 665.5Z" fill="#eeedef" stroke="#d8d8d8" stroke-width="0.5"/><path d="M801.7 683.7 800.4 687.6 799.3 687.1 799.0 683.4 801.7 683.7Z" fill="#eeedef" stroke="#d8d8d8" stroke-width="0.5"/><path d="M816.1 649.4 816.8 641.7 817.5 642.4 819.6 653.8 818.2 653.8 816.1 660.2 816.1 649.4Z" fill="#eeedef" stroke="#d8d8d8" stroke-width="0.5"/><path d="M786.2 696.9 787.6 697.3 785.9 701.9 785.1 700.7 786.2 696.9Z" fill="#eeedef" stroke="#d8d8d8" stroke-width="0.5"/><path d="M728.3 720.0 730.4 723.3 728.6 725.5 727.6 722.6 728.3 720.0Z" fill="#eeedef" stroke="#d8d8d8" stroke-width="0.5"/><path d="M771.3 704.8 772.0 705.6 769.8 707.7 768.7 706.2 771.3 704.8Z" fill="#eeedef" stroke="#d8d8d8" stroke-width="0.5"/><path d="M640.0 532.8 646.6 531.7 653.2 535.0 647.7 542.6 648.8 553.6 643.3 551.4 637.9 558.0 632.4 548.1 630.2 537.2 640.0 532.8Z" fill="#eeedef" stroke="#d8d8d8" stroke-width="0.5"/><path d="M693.7 574.1 702.3 564.3 712.2 557.0 708.0 566.0 696.6 581.5 692.3 590.1 688.1 588.3 693.7 574.1Z" fill="#eeedef" stroke="#d8d8d8" stroke-width="0.5"/><path d="M756.3 526.9 763.4 546.9 756.3 550.4 749.2 543.3 756.3 526.9Z" fill="#eeedef" stroke="#d8d8d8" stroke-width="0.5"/><path d="M816.1 563.1 827.4 567.1 821.7 571.5 808.9 568.8 816.1 563.1Z" fill="#eeedef" stroke="#d8d8d8" stroke-width="0.5"/><path d="M362.4 587.4 359.5 588.8 358.1 586.1 362.4 587.4Z" fill="#eeedef" stroke="#d8d8d8" stroke-width="0.5"/><path d="M607.7 649.4 609.1 648.5 606.6 647.6 608.1 646.7 607.6 644.1 610.0 644.1 609.3 641.7 609.8 640.2 607.7 640.4 605.6 639.4 606.1 636.7 605.3 633.5 607.0 630.6 609.8 630.6 609.1 633.0 611.5 633.5 611.0 636.7 611.8 638.4 613.4 641.2 614.5 643.8 616.5 645.5 616.1 649.0 609.8 650.1 606.0 651.4 607.7 649.4Z" fill="#eeedef" stroke="#d8d8d8" stroke-width="0.5"/><path d="M605.6 643.6 605.3 646.7 602.7 648.0 599.9 647.8 600.2 644.3 599.9 641.9 602.4 639.4 603.7 639.4 605.6 639.4 605.6 643.6Z" fill="#eeedef" stroke="#d8d8d8" stroke-width="0.5"/><path d="M636.3 675.0 635.6 677.8 631.9 676.2 631.7 675.3 636.3 675.0Z" fill="#eeedef" stroke="#d8d8d8" stroke-width="0.5"/><path d="M628.0 670.0 627.8 673.5 626.2 673.7 626.0 670.9 625.8 670.0 628.0 670.0Z" fill="#eeedef" stroke="#d8d8d8" stroke-width="0.5"/><path d="M627.6 666.5 627.5 669.2 626.3 668.6 626.3 666.1 627.6 666.5Z" fill="#eeedef" stroke="#d8d8d8" stroke-width="0.5"/><path d="M631.9 637.4 632.0 639.2 630.5 639.9 629.7 637.9 631.9 637.4Z" fill="#eeedef" stroke="#d8d8d8" stroke-width="0.5"/><path d="M651.4 680.5 648.9 681.0 647.5 680.3 651.4 680.5Z" fill="#eeedef" stroke="#d8d8d8" stroke-width="0.5"/><path d="M663.2 679.8 661.7 681.5 660.0 680.6 663.2 679.8Z" fill="#eeedef" stroke="#d8d8d8" stroke-width="0.5"/><path d="M690.9 526.9 708.0 527.8 704.6 534.2 690.9 534.2 680.8 533.3 679.1 529.1 690.9 526.9Z" fill="#eeedef" stroke="#d8d8d8" stroke-width="0.5"/><path d="M496.8 700.5 500.3 700.2 503.9 702.2 508.6 704.7 503.9 705.1 502.5 702.7 498.2 701.9 493.9 702.7 493.2 702.2 496.8 700.5Z" fill="#f4f4f5" stroke="#ececec" stroke-width="0.4"/><path d="M510.6 705.1 514.5 705.4 516.8 707.1 514.5 707.7 512.4 708.6 508.3 707.7 508.1 707.2 510.6 705.1Z" fill="#f4f4f5" stroke="#ececec" stroke-width="0.4"/><path d="M505.6 707.7 504.6 708.3 502.7 707.4 505.6 707.7Z" fill="#f4f4f5" stroke="#ececec" stroke-width="0.4"/><path d="M504.6 694.9 503.9 697.3 502.9 696.9 503.2 694.4 504.6 694.9Z" fill="#f4f4f5" stroke="#ececec" stroke-width="0.4"/><path d="M393.7 706.0 392.5 706.6 392.2 705.3 392.2 704.7 393.7 706.0Z" fill="#f4f4f5" stroke="#ececec" stroke-width="0.4"/><path d="M389.8 703.0 389.1 703.1 389.0 702.5 389.8 703.0Z" fill="#f4f4f5" stroke="#ececec" stroke-width="0.4"/><path d="M387.5 701.8 387.1 702.1 386.8 701.6 387.5 701.8Z" fill="#f4f4f5" stroke="#ececec" stroke-width="0.4"/><path d="M379.4 641.9 379.4 643.1 376.6 643.8 376.6 642.9 379.4 641.9Z" fill="#eeedef" stroke="#d8d8d8" stroke-width="0.5"/><path d="M375.2 641.9 375.2 643.1 372.3 643.8 372.3 642.9 375.2 641.9Z" fill="#eeedef" stroke="#d8d8d8" stroke-width="0.5"/><path d="M370.2 645.7 370.2 646.9 367.3 647.6 367.3 646.7 370.2 645.7Z" fill="#eeedef" stroke="#d8d8d8" stroke-width="0.5"/><path d="M365.2 645.7 365.2 646.9 362.4 647.6 362.4 646.7 365.2 645.7Z" fill="#eeedef" stroke="#d8d8d8" stroke-width="0.5"/><path d="M360.9 645.7 360.9 646.9 358.1 647.6 358.1 646.7 360.9 645.7Z" fill="#eeedef" stroke="#d8d8d8" stroke-width="0.5"/><path d="M355.3 641.9 355.3 643.1 352.4 643.8 352.4 642.9 355.3 641.9Z" fill="#eeedef" stroke="#d8d8d8" stroke-width="0.5"/><path d="M350.3 641.9 350.3 643.1 347.4 643.8 347.4 642.9 350.3 641.9Z" fill="#eeedef" stroke="#d8d8d8" stroke-width="0.5"/><path d="M686.6 658.1 689.5 659.1 689.5 662.2 686.6 663.2 688.8 668.1 689.5 671.8 690.9 676.4 686.6 677.8 683.8 676.4 684.5 671.3 681.7 667.1 681.7 663.2 683.8 659.1 686.6 658.1Z" fill="#ffffff" stroke="#d6d6d6" stroke-width="0.4"/><path d="M701.6 659.1 699.4 664.2 697.3 663.2 697.3 659.1 701.6 659.1Z" fill="#ffffff" stroke="#d6d6d6" stroke-width="0.4"/><path d="M765.6 646.0 769.8 638.7 769.1 643.6 766.3 647.1 762.0 647.8 765.6 646.0Z" fill="#ffffff" stroke="#d6d6d6" stroke-width="0.4"/><path d="M658.2 622.3 660.7 623.8 658.9 626.7 656.1 626.1 658.2 622.3Z" fill="#ffffff" stroke="#d6d6d6" stroke-width="0.4"/><path d="M664.6 618.4 666.0 622.3 663.2 623.8 664.6 618.4Z" fill="#ffffff" stroke="#d6d6d6" stroke-width="0.4"/><path d="M611.7 680.6 612.4 685.8 608.8 687.8 601.7 691.4 601.7 693.6M601.7 693.6 597.0 695.7 597.0 699.6 595.6 703.0 589.9 703.0M601.7 693.6 607.3 697.3 615.8 703.9 618.8 706.5 622.3 705.9 624.8 703.7 631.0 699.6M626.2 677.3 625.9 681.5 624.8 683.9 627.6 688.9 628.3 696.8 631.0 699.6M649.7 686.6 649.7 701.9 666.6 701.9M631.0 699.6 635.4 700.4 648.2 705.7 648.2 705.0 649.7 705.0 649.7 701.9M618.8 706.5 620.1 710.2 615.8 712.4 614.4 712.6 610.5 712.4 606.3 711.7 597.7 711.7 597.0 712.9 590.6 710.9M601.7 693.6 607.3 697.3 605.6 703.4 606.3 711.7M635.4 700.4 636.1 705.0 634.0 715.4 633.3 714.6 624.1 715.4 619.2 717.2 617.9 725.0M648.2 705.7 646.1 713.9 645.4 718.3 646.1 719.7 652.5 720.4 662.5 720.4 663.9 726.9 672.4 728.3M666.0 713.4 662.5 720.4M675.7 716.8 676.7 721.1 682.4 722.6 673.1 728.3 672.4 736.4M672.4 728.3 663.9 727.6 662.5 732.6 662.5 735.4 667.4 739.0 669.9 740.7M631.6 742.5 636.9 742.5 637.6 745.4 645.4 749.7 648.2 749.7 653.2 751.9 657.5 746.1 655.3 740.4 656.1 736.1 656.8 732.6 658.2 731.2 656.8 728.3 653.2 726.9 649.7 726.9 646.1 727.6 641.1 729.0 640.4 730.4 639.0 734.7 637.1 736.1 632.6 740.4M634.7 730.9 636.9 731.2 634.7 725.5 636.1 723.3 640.4 721.9 645.4 718.3M626.2 727.6 628.3 724.7 631.2 722.6 634.7 716.8 634.0 715.4M628.0 730.7 630.2 730.9 632.6 730.7 634.7 730.9 632.6 736.8 630.5 739.0M630.9 759.0 633.7 759.1 641.1 759.7 647.5 759.3 649.7 759.7M645.4 749.7 648.2 752.6 645.4 752.6 645.4 757.1 647.5 759.3M642.5 766.1 642.5 770.4 642.5 776.3 637.6 776.3M642.5 770.4 649.7 771.5 655.3 766.4 658.6 766.7 659.6 773.1M649.7 759.7 653.9 757.1 657.5 756.5 661.0 757.8 660.3 761.5 658.6 766.7 653.2 763.0 649.7 759.7M671.7 749.0 663.9 750.5 663.2 754.1 664.6 758.5 660.3 755.6 657.5 756.5M657.5 746.1 661.0 747.6 663.9 750.5M662.5 735.4 656.8 735.4M606.3 719.0 609.8 718.3 614.1 718.3 616.9 716.1 615.8 712.4M597.0 712.9 597.7 716.1 602.0 719.0 603.4 721.9 603.4 727.7M609.8 726.9 610.5 721.9 610.1 718.3M615.5 725.5 614.8 718.3M617.9 725.0 619.2 717.2M595.2 721.9 599.2 721.9 598.5 724.2M592.8 718.5 595.6 716.1 590.2 716.1M642.5 687.6 642.5 701.9 648.2 705.0M656.8 735.4 656.1 740.4 657.5 746.1M683.8 659.1 683.1 654.9 685.9 649.4 692.3 649.9 700.9 649.9 701.6 642.4 712.2 638.9 718.6 642.4 723.3 641.4 727.9 649.4 732.9 649.4 738.3 653.6M689.5 668.1 693.7 669.4 697.3 661.2 702.3 665.2 708.0 666.1 712.2 669.2 715.1 667.7 719.3 665.7 727.9 666.3 728.6 662.2 732.1 658.1 735.7 657.5 738.3 653.6M738.3 653.6 744.9 650.5 753.5 647.1 764.9 651.0 776.2 651.0 780.1 652.1 784.8 644.1 794.7 652.3 800.4 656.6 806.1 655.1 803.3 662.2 800.4 666.5M738.3 653.6 742.8 661.2 750.6 666.7 763.4 668.8 772.7 665.5 778.4 662.2 784.1 658.1 780.1 652.1M727.9 666.3 720.1 671.8 720.8 677.3 725.0 679.9 726.5 685.9 729.3 689.2 739.3 692.5 744.9 692.8 752.1 691.7 754.2 697.3 757.0 702.7 760.6 701.1 765.6 701.1 767.7 702.7M711.5 699.6 715.1 698.0 714.4 692.5 720.1 687.6 720.8 684.2 724.3 679.9M701.6 696.9 703.7 694.1 700.9 689.6 708.0 689.2 713.7 683.4 715.8 679.1 720.1 677.3M700.9 689.6 700.9 679.9 695.2 675.5 690.8 676.8M700.9 679.9 706.5 676.4 713.7 676.4 720.1 677.3M689.5 668.1 697.3 661.2M693.7 669.4 700.9 679.9M682.4 689.2 680.9 684.2 678.8 680.8 677.4 676.4 676.7 672.9 673.4 667.1M665.3 679.1 673.8 677.3 677.4 676.4M663.7 690.1 667.4 689.2 669.6 685.9 673.8 686.8 680.9 690.9 682.4 692.5M675.3 708.7 680.9 710.2 688.1 706.5 692.3 701.1 688.1 698.8M673.4 667.1 681.7 669.0M673.8 677.3 673.8 685.9 669.6 685.9M665.3 684.2 668.9 683.4 673.8 677.3M668.1 659.1 671.0 652.7 668.1 648.3 663.9 646.4 659.6 647.1M647.5 642.6 651.1 638.2 653.9 637.4 659.3 646.9 653.9 648.3 647.7 648.0M653.9 637.4 653.2 633.5 653.9 628.1M644.3 639.4 651.1 638.2M644.0 635.4 653.2 633.5M645.7 655.1 651.9 655.6 654.2 661.2M646.4 652.7 645.7 655.1 642.5 659.7 646.1 663.2 654.9 663.6M638.3 654.9 641.1 656.0 645.7 655.1M636.9 658.7 640.4 660.6 642.5 659.7M635.4 653.8 641.1 653.0M633.4 660.8 636.9 659.1 641.1 662.2 641.8 667.1M646.1 663.2 646.8 669.4 651.4 670.5M641.8 670.0 644.0 668.1 646.8 669.4M754.2 716.8 754.2 710.9 756.3 704.2M763.4 713.9 759.9 716.5M765.6 704.2 767.0 713.2 764.9 718.3M757.0 724.7 759.2 725.5M756.3 704.2 760.6 701.1M756.3 704.2 763.4 713.9M740.7 702.2 740.7 695.7 744.9 697.3 745.7 702.7M791.2 672.2 798.6 667.1 799.8 667.3M793.3 675.5 796.9 674.6M729.3 689.2 739.3 694.1M501.7 732.3 506.7 734.1M499.9 739.0 502.5 741.1 506.7 736.1M506.7 734.1 514.5 740.1M516.4 749.9 516.0 751.2 515.3 756.3 515.3 759.3 514.0 760.5M515.3 759.3 516.7 766.5 518.8 767.3M524.8 766.1 525.9 763.0 531.3 762.3M533.0 725.5 531.6 731.3M537.3 725.9 536.6 730.7M487.2 711.1 487.2 713.9M489.7 715.4 493.2 713.9M495.3 712.4 491.8 715.4M492.2 718.0 495.1 718.3M496.2 720.4 496.3 722.3" fill="none" stroke="#b0b0b2" stroke-width="0.6"/><path d="M390.8 634.1 389.4 630.3 383.0 629.5 383.4 626.7 379.1 625.5 378.0 622.3 381.6 617.4 385.4 615.2 385.1 612.9 378.7 612.9 375.0 609.2 383.7 607.5 380.1 603.9 381.3 601.3 377.7 597.0 382.3 593.8 386.5 590.1 391.1 587.0 397.9 589.2 403.6 591.3 410.0 592.2 413.6 594.2 413.6 625.8 416.4 625.8 418.5 629.5 421.4 627.3 424.9 631.1 426.7 635.9 429.2 637.7 429.2 640.7 427.1 639.9 423.5 636.2 420.7 632.2 418.5 630.9 415.7 628.1 413.6 627.3 409.3 626.7 405.0 625.0 402.2 626.7 399.3 624.7 398.6 628.7 396.5 628.1 395.1 630.9 391.5 634.9 389.0 636.2 390.8 634.1Z" fill="#5c9b2e" stroke="#666666" stroke-width="0.8"/><path d="M520.8 707.5 520.5 708.0 518.5 708.0 518.5 707.2 520.8 707.5Z" fill="#5c9b2e" stroke="#666666" stroke-width="0.8"/><path d="M393.7 706.0 392.5 706.6 392.2 705.3 392.2 704.7 393.7 706.0Z" fill="#5c9b2e" stroke="#666666" stroke-width="0.6"/><path d="M389.8 703.0 389.1 703.1 389.0 702.5 389.8 703.0Z" fill="#5c9b2e" stroke="#666666" stroke-width="0.6"/><path d="M387.5 701.8 387.1 702.1 386.8 701.6 387.5 701.8Z" fill="#5c9b2e" stroke="#666666" stroke-width="0.6"/><path d="M374.2 616.8 371.6 617.7 369.8 615.2 374.2 616.8Z" fill="#5c9b2e" stroke="#666666" stroke-width="0.6"/><path d="M378.6 626.4 377.3 627.3 376.9 625.5 378.6 626.4Z" fill="#5c9b2e" stroke="#666666" stroke-width="0.6"/><path d="M388.7 638.4 383.7 641.4 378.0 643.8 372.3 646.4 366.6 647.8 360.9 649.2 358.8 649.4 358.8 648.0 360.9 647.4 366.6 646.0 372.3 644.3 378.0 641.7 383.7 638.4 390.8 634.1 388.7 638.4Z" fill="#5c9b2e" stroke="#666666" stroke-width="0.8"/><path d="M438.9 655.6 439.2 653.8 478.7 653.8 486.8 656.0 488.9 655.6 493.8 659.1 496.8 661.6 496.9 666.1 496.1 668.1 501.7 666.5 501.7 665.5 505.3 663.8 507.9 662.2 513.3 661.6 515.7 657.2 517.7 657.9 517.7 660.8 518.8 662.6 514.3 664.8 513.7 666.7 514.5 668.8 511.7 670.0 508.9 670.9 507.1 674.6 506.0 677.3 506.7 680.5 504.6 681.3 501.7 683.4 499.0 685.9 498.3 688.1 499.5 691.7 500.2 694.4 499.8 696.9 498.8 696.9 496.6 692.8 495.1 689.4 493.2 689.7 489.7 688.7 486.7 688.9 487.2 690.7 484.7 690.5 479.7 690.1 475.6 692.8 475.9 695.8 472.6 693.3 469.7 689.6 467.6 690.9 465.5 689.9 462.6 686.3 460.2 687.1 456.2 687.1 451.0 684.7 447.6 685.1 445.6 682.5 442.0 680.8 439.9 676.4 437.5 671.1 437.0 666.5 437.7 659.5 436.7 655.1 438.9 655.6Z" fill="#5c9b2e" stroke="#666666" stroke-width="0.8"/><path d="M416.4 594.6 420.7 597.0 420.0 596.0 432.6 591.1 436.5 594.0 449.2 596.9 452.1 600.8 460.8 604.7 462.8 598.9 470.5 597.9 474.4 600.8 478.3 602.8 482.2 596.9 488.0 598.9 490.9 602.8 493.9 594.0 498.7 596.0 497.7 605.7 490.0 608.6 487.1 609.6 485.4 615.2 481.8 619.3 479.7 623.8 479.7 629.5 482.5 633.5 487.5 635.4 493.2 639.4 496.8 644.8 499.6 648.7 501.7 648.3 501.0 641.2 503.9 637.4 504.6 629.5 502.9 624.4 503.9 619.3 511.0 620.8 514.5 623.8 515.3 629.8 518.1 631.4 521.7 629.5 522.4 625.8 525.9 633.5 528.1 637.9 532.3 641.2 534.9 646.0 533.0 648.3 530.2 650.5 522.4 651.2 517.4 653.2 514.5 657.7 519.5 653.4 521.9 656.4 522.8 659.5 526.6 659.7 528.8 660.2 524.5 663.0 520.2 665.0 522.4 661.2 520.2 662.2 518.8 662.6 517.7 660.8 517.7 657.9 515.7 657.2 513.3 661.6 507.9 662.2 505.3 663.8 501.7 665.5 501.7 666.5 496.1 668.1 496.9 666.1 496.8 661.6 493.8 659.1 488.9 655.6 486.8 656.0 478.7 653.8 438.9 653.8 436.3 651.6 432.8 649.4 430.6 646.0 428.5 642.4 429.2 640.7 429.2 637.7 426.7 635.9 424.9 631.1 421.4 627.3 418.5 629.5 416.4 625.8 413.6 625.8 413.6 594.2 416.4 594.6Z" fill="#bfe39c" stroke="#666666" stroke-width="0.8"/><path d="M449.2 578.5 454.0 579.4 458.9 581.9 461.8 579.4 463.2 576.0 465.2 577.5 465.7 585.3 470.5 592.1 468.6 596.0 464.7 597.4 458.9 598.4 453.0 596.9 448.2 594.0 450.1 590.1 446.2 586.2 445.8 580.9 449.2 578.5Z" fill="#bfe39c" stroke="#666666" stroke-width="0.8"/><path d="M438.0 572.6 442.4 571.6 450.1 577.5 446.2 582.4 440.4 587.2 436.0 582.4 438.0 572.6Z" fill="#bfe39c" stroke="#666666" stroke-width="0.8"/><path d="M472.5 574.6 476.4 574.1 477.3 580.4 474.4 586.2 470.5 583.3 468.6 579.4 472.5 574.6Z" fill="#bfe39c" stroke="#666666" stroke-width="0.8"/><path d="M483.2 573.6 485.1 579.4 482.2 583.3 479.3 581.4 478.8 574.6 483.2 573.6Z" fill="#bfe39c" stroke="#666666" stroke-width="0.8"/><path d="M480.7 584.3 483.2 593.0 480.3 596.0 477.3 592.1 477.8 587.2 480.7 584.3Z" fill="#bfe39c" stroke="#666666" stroke-width="0.8"/><path d="M490.0 575.5 494.8 575.5 501.6 576.5 505.5 579.4 510.4 586.2 517.2 590.1 519.1 596.9 526.9 605.7 524.0 611.5 520.1 607.6 518.2 612.5 522.0 619.3 516.2 620.2 511.3 614.4 504.5 612.5 505.5 605.7 510.4 600.8 507.5 593.0 502.6 592.1 498.7 589.2 491.9 589.2 488.0 587.2 487.1 583.3 490.0 575.5Z" fill="#bfe39c" stroke="#666666" stroke-width="0.8"/><path d="M496.8 610.5 500.7 616.4 494.8 617.3 491.9 614.4 491.9 608.6 496.8 610.5Z" fill="#bfe39c" stroke="#666666" stroke-width="0.8"/><path d="M476.4 593.0 478.3 596.9 475.4 598.9 473.5 595.0 476.4 593.0Z" fill="#bfe39c" stroke="#666666" stroke-width="0.8"/><path d="M501.6 526.2 520.6 526.2 510.4 540.0 506.0 542.9 508.2 553.2 503.8 556.0 494.3 555.3 491.4 550.2 488.5 548.8 482.7 545.1 481.2 541.5 477.6 535.6 479.0 529.8 478.3 526.2 501.6 526.2Z" fill="#bfe39c" stroke="#666666" stroke-width="0.8"/><path d="M484.9 557.5 489.2 561.9 495.8 564.1 500.9 565.5 501.6 570.6 495.8 572.1 487.1 570.6 482.7 566.3 478.3 562.6 477.6 558.3 484.9 557.5Z" fill="#bfe39c" stroke="#666666" stroke-width="0.8"/><path d="M468.1 540.8 471.7 545.9 473.9 551.7 470.3 552.5 465.9 547.3 464.5 541.5 468.1 540.8Z" fill="#bfe39c" stroke="#666666" stroke-width="0.8"/><path d="M477.6 545.9 481.2 552.5 479.0 554.6 476.1 551.0 474.7 545.1 477.6 545.9Z" fill="#bfe39c" stroke="#666666" stroke-width="0.8"/><path d="M458.6 545.9 459.4 551.0 455.0 553.9 452.1 551.7 453.5 547.3 458.6 545.9Z" fill="#bfe39c" stroke="#666666" stroke-width="0.8"/><path d="M447.7 553.9 449.9 558.3 445.5 564.8 440.4 563.3 441.9 559.0 447.7 553.9Z" fill="#bfe39c" stroke="#666666" stroke-width="0.8"/><path d="M455.0 560.5 460.1 558.3 463.7 565.5 463.7 569.2 455.0 572.1 449.2 566.3 447.0 561.9 455.0 560.5Z" fill="#bfe39c" stroke="#666666" stroke-width="0.8"/><path d="M473.9 559.7 476.1 567.7 470.3 567.7 465.9 563.3 466.6 559.7 473.9 559.7Z" fill="#bfe39c" stroke="#666666" stroke-width="0.8"/><path d="M481.2 566.3 481.9 570.6 478.3 570.6 478.3 566.3 481.2 566.3Z" fill="#bfe39c" stroke="#666666" stroke-width="0.8"/><path d="M530.2 654.9 532.3 650.5 535.2 648.3 535.2 652.7 539.0 656.0 538.7 658.7 534.5 657.0 529.8 656.8 530.2 654.9Z" fill="#bfe39c" stroke="#666666" stroke-width="0.8"/><path d="M435.6 650.8 438.7 655.3 435.6 654.3 431.6 649.9 435.6 650.8Z" fill="#bfe39c" stroke="#666666" stroke-width="0.8"/><path d="M425.7 642.2 427.8 646.0 426.4 647.1 427.1 644.8 424.9 642.4 425.7 642.2Z" fill="#bfe39c" stroke="#666666" stroke-width="0.8"/><path d="M526.6 653.4 522.4 653.2 523.1 651.9 526.6 653.4Z" fill="#bfe39c" stroke="#666666" stroke-width="0.8"/><path d="M525.9 659.1 524.5 659.7 523.1 658.3 525.9 659.1Z" fill="#bfe39c" stroke="#666666" stroke-width="0.8"/><path d="M528.8 659.7 526.6 661.0 527.3 658.1 528.8 659.7Z" fill="#bfe39c" stroke="#666666" stroke-width="0.8"/><path d="M484.7 657.7 486.8 655.6 491.1 654.5 493.5 656.6 493.6 658.5 490.4 659.1 486.1 658.9 483.3 658.7 484.7 657.7Z" fill="#ffffff" stroke="#666666" stroke-width="0.5"/><path d="M490.1 665.2 489.7 661.2 493.2 660.2 492.5 662.2 491.1 667.1 489.2 668.1 490.1 665.2Z" fill="#ffffff" stroke="#666666" stroke-width="0.5"/><path d="M497.5 661.2 494.6 660.2 500.3 660.6 498.2 663.2 498.0 665.5 496.8 666.1 497.5 661.2Z" fill="#ffffff" stroke="#666666" stroke-width="0.5"/><path d="M501.7 666.3 501.3 667.3 497.5 669.2 495.5 668.6 501.7 666.3Z" fill="#ffffff" stroke="#666666" stroke-width="0.5"/><path d="M501.3 665.0 505.3 664.0 505.6 665.2 500.6 665.5 501.3 665.0Z" fill="#ffffff" stroke="#666666" stroke-width="0.5"/><path d="M442.0 619.9 447.7 620.8 452.7 624.4 446.3 623.8 436.3 622.3 442.0 619.9Z" fill="#ffffff" stroke="#666666" stroke-width="0.5"/><path d="M444.9 606.0 447.0 609.5 439.2 611.9 434.9 608.5 444.9 606.0Z" fill="#ffffff" stroke="#666666" stroke-width="0.5"/><path d="M474.7 648.3 473.3 643.6 476.9 643.6 476.9 650.5 472.6 650.5 474.7 648.3Z" fill="#ffffff" stroke="#666666" stroke-width="0.5"/><path d="M460.5 628.1 467.6 628.9 466.2 630.0 457.7 630.9 460.5 628.1Z" fill="#ffffff" stroke="#666666" stroke-width="0.5"/><path d="M451.0 684.7 456.2 687.1 460.2 687.1 462.6 686.3 465.5 689.9 467.6 690.9 469.7 689.6 472.6 693.3 475.9 695.8 475.1 698.8 475.9 703.4 479.0 707.2 483.3 707.1 485.4 705.3 485.7 703.4 490.4 702.7 489.7 707.2 488.5 707.2 487.4 708.3 484.7 709.0 484.1 710.8 483.0 713.2 480.4 710.9 476.9 711.4 472.6 709.9 466.9 707.5 464.1 704.2 464.5 701.9 462.6 699.6 459.1 696.3 456.2 692.7 453.7 688.4 451.0 686.4 453.4 690.9 455.5 695.7 457.7 698.8 458.4 700.4 457.2 700.1 454.8 697.7 452.0 692.8 449.4 688.7 447.6 685.1 451.0 684.7Z" fill="#d6ebb4" stroke="#666666" stroke-width="0.8"/><path d="M514.5 716.5 516.7 719.0 520.2 718.8 523.1 718.8 525.9 718.7 527.3 719.7 527.6 721.9 529.1 722.2 528.1 724.0 527.3 726.2 527.9 727.6 524.8 728.3 522.4 728.6 523.1 731.2 519.8 732.9 518.5 730.7 517.4 731.2 518.2 729.0 517.7 725.5 515.5 725.3 513.8 724.0 511.7 724.0 511.0 722.6 511.0 718.1 511.8 717.4 514.5 716.5Z" fill="#a9d78a" stroke="#666666" stroke-width="0.8"/><path d="M543.0 731.4 543.0 734.0 545.1 735.4 550.8 737.6 555.1 738.1 559.3 739.3 564.3 741.8 564.6 744.3 563.9 747.6 560.8 751.2 558.6 754.1 558.3 759.3 557.2 763.0 555.8 766.1 552.2 767.6 548.7 769.2 545.1 772.3 544.7 776.3 541.6 780.4 539.4 783.8 538.2 785.0 538.0 782.9 535.2 780.4 532.2 779.1 534.9 774.7 537.6 773.9 536.4 771.7 536.9 769.2 535.2 768.4 531.9 766.4 531.6 763.0 531.3 762.3 532.3 760.0 530.9 757.5 528.5 757.4 528.1 753.8 525.9 752.8 521.7 750.9 521.1 748.0 519.5 748.2 516.4 749.9 513.7 749.7 511.7 748.3 509.9 747.4 508.9 744.7 510.4 741.4 514.5 740.1 515.4 735.7 514.5 733.1 515.7 732.6 514.5 731.2 518.5 730.7 519.8 732.9 523.1 731.2 522.4 728.6 524.8 728.3 527.9 727.6 528.8 726.6 529.5 729.0 529.1 732.2 533.0 731.3 536.6 730.7 539.4 730.9 540.7 728.0 543.0 731.4Z" fill="#9ecf80" stroke="#666666" stroke-width="0.8"/><path d="M524.8 766.1 527.3 768.9 532.2 771.4 530.9 774.2 534.9 774.7 536.4 771.7 537.6 773.9 534.6 776.3 532.2 779.1 531.3 782.9 531.0 785.5 532.7 788.1 533.5 789.8 532.0 792.9 525.9 794.3 525.5 797.1 521.7 798.0 521.7 800.9 523.5 800.5 521.2 804.8 518.1 807.8 520.5 811.6 517.0 816.6 515.8 820.0 516.8 823.2 513.1 823.2 511.3 819.7 510.3 816.4 512.4 803.8 511.7 799.9 513.1 792.5 513.8 787.2 514.5 783.8 513.8 778.8 515.3 775.5 516.7 773.1 517.1 769.2 518.8 767.3 520.7 766.2 524.8 766.1Z" fill="#ddeebf" stroke="#666666" stroke-width="0.8"/><path d="M612.4 660.2 611.0 657.7 607.7 656.2 607.4 654.7 611.8 654.5 612.3 652.3 614.4 652.7 616.4 651.2 617.7 649.2 620.1 651.0 620.9 651.6 622.3 652.7 623.2 652.7 625.8 653.8 624.9 656.8 622.6 659.5 624.1 660.4 623.5 662.0 624.8 664.6 622.6 665.9 618.4 665.5 618.7 667.3 616.5 667.1 611.5 665.4 612.4 660.2Z" fill="#a6d587" stroke="#666666" stroke-width="0.8"/><path d="M602.7 664.8 608.4 665.4 611.5 665.4 616.5 667.1 618.7 667.3 618.7 668.1 615.2 670.0 613.7 672.8 614.4 674.2 613.1 676.2 611.1 677.8 607.7 677.8 606.1 679.1 605.1 677.6 603.6 676.9 603.4 674.6 604.1 672.8 604.3 670.0 602.4 668.3 601.4 668.1 600.9 666.1 602.7 664.8Z" fill="#d8ebb6" stroke="#666666" stroke-width="0.8"/><path d="M602.4 668.3 604.3 670.0 604.1 672.8 603.4 674.6 603.6 676.9 601.3 677.3 601.6 674.6 600.6 674.0 601.4 670.9 601.4 668.3 602.4 668.3Z" fill="#dcedbc" stroke="#666666" stroke-width="0.8"/><path d="M626.3 642.6 626.3 639.9 628.0 640.4 629.6 642.4 633.3 641.4 634.4 642.6 634.9 645.7 635.4 649.4 631.6 651.0 633.7 654.3 632.6 657.0 629.0 657.0 627.6 656.8 624.9 656.8 625.8 653.8 623.2 652.7 622.8 649.9 622.6 647.6 624.1 646.7 624.1 643.6 626.3 642.6Z" fill="#64a03a" stroke="#666666" stroke-width="0.8"/><path d="M629.0 657.0 632.6 657.0 633.7 654.3 635.4 653.8 638.3 654.9 638.4 656.6 637.6 658.1 636.9 658.7 633.6 659.1 631.5 658.1 629.0 658.3 627.8 657.9 627.8 657.0 629.0 657.0Z" fill="#7dba5e" stroke="#666666" stroke-width="0.8"/><path d="M624.9 656.8 627.6 656.8 627.8 657.9 629.0 658.3 628.6 659.7 626.9 660.4 625.5 660.2 624.1 660.4 622.6 659.5 624.9 656.8Z" fill="#c8e7ab" stroke="#666666" stroke-width="0.8"/><path d="M625.5 660.2 626.9 660.4 628.6 659.7 629.0 658.3 631.5 658.1 633.6 659.1 633.4 660.8 631.6 661.6 631.9 663.8 634.0 667.1 636.9 669.0 640.4 671.5 638.6 672.8 637.6 673.7 636.4 675.5 637.0 673.9 636.4 671.8 634.0 670.3 631.9 668.6 629.0 666.1 626.6 663.4 624.8 664.6 623.5 662.0 624.1 660.4 625.5 660.2Z" fill="#d9ecb8" stroke="#666666" stroke-width="0.8"/><path d="M618.9 648.5 620.2 648.5 622.3 649.0 622.8 649.9 623.2 652.7 622.3 652.7 620.9 651.6 620.1 651.0 617.7 649.2 618.9 648.5Z" fill="#c8e7ab" stroke="#666666" stroke-width="0.8"/><path d="M625.6 635.4 629.0 633.0 628.7 636.2 629.5 636.9 628.3 639.4 628.0 640.4 626.3 639.9 625.6 635.4Z" fill="#c3e4a3" stroke="#666666" stroke-width="0.8"/><path d="M629.0 628.1 628.6 629.5 625.8 631.9 622.2 630.3 621.2 626.7 621.2 620.8 624.1 618.4 629.0 612.9 631.9 607.8 634.0 602.4 636.1 598.6 639.0 594.6 641.8 591.7 646.8 590.1 651.1 587.9 654.6 588.8 658.2 591.3 657.9 593.4 655.3 594.6 654.6 596.6 651.1 593.4 648.9 597.8 644.7 595.4 643.3 596.6 640.4 598.6 636.9 602.4 633.3 612.9 631.5 620.8 631.9 625.3 631.0 628.1 630.0 629.2 629.0 628.1Z" fill="#dfefc2" stroke="#666666" stroke-width="1.3"/><path d="M631.9 625.3 631.5 620.8 633.3 612.9 636.9 602.4 640.4 598.6 643.3 596.6 647.5 602.4 648.5 608.5 645.4 609.2 644.3 613.9 641.0 617.1 638.6 622.3 638.4 625.3 641.0 627.3 637.6 634.9 636.6 637.2 634.3 638.9 632.3 638.9 631.0 633.8 630.0 629.2 631.0 628.1 631.9 625.3Z" fill="#b3dc92" stroke="#666666" stroke-width="0.8"/><path d="M647.5 602.4 643.3 596.6 644.7 595.4 648.9 597.8 651.1 593.4 654.6 596.6 655.3 594.6 654.6 600.5 656.8 602.4 655.3 607.8 656.8 614.5 658.9 618.0 653.2 625.3 651.1 625.5 646.7 627.3 644.4 624.7 644.5 619.0 649.9 610.9 648.5 608.5 647.5 602.4Z" fill="#d4e9b0" stroke="#666666" stroke-width="0.8"/><path d="M637.6 641.2 640.6 640.4 641.8 641.4 646.5 641.4 647.5 642.6 647.9 645.5 647.1 646.7 648.4 649.6 646.4 652.7 641.1 653.0 638.3 650.8 635.4 649.4 634.9 645.7 634.4 642.6 637.6 641.2Z" fill="#e0efc4" stroke="#666666" stroke-width="0.8"/><path d="M607.7 649.4 609.1 648.5 606.6 647.6 608.1 646.7 607.6 644.1 610.0 644.1 609.3 641.7 609.8 640.2 607.7 640.4 605.6 639.4 606.1 636.7 605.3 633.5 607.0 630.6 609.8 630.6 609.1 633.0 611.5 633.5 611.0 636.7 611.8 638.4 613.4 641.2 614.5 643.8 616.5 645.5 616.1 649.0 609.8 650.1 606.0 651.4 607.7 649.4Z" fill="#b3dc92" stroke="#666666" stroke-width="0.8"/><path d="M605.6 643.6 605.3 646.7 602.7 648.0 599.9 647.8 600.2 644.3 599.9 641.9 602.4 639.4 603.7 639.4 605.6 639.4 605.6 643.6Z" fill="#b8df98" stroke="#666666" stroke-width="0.8"/><path d="M605.3 642.4 602.7 641.2 603.7 639.4 605.6 639.4 605.3 642.4Z" fill="#b3dc92" stroke="#666666" stroke-width="0.8"/><path d="M636.3 675.0 635.6 677.8 631.9 676.2 631.7 675.3 636.3 675.0Z" fill="#d9ecb8" stroke="#666666" stroke-width="0.8"/><path d="M628.0 670.0 627.8 673.5 626.2 673.7 626.0 670.9 625.8 670.0 628.0 670.0Z" fill="#d9ecb8" stroke="#666666" stroke-width="0.8"/><path d="M627.6 666.5 627.5 669.2 626.3 668.6 626.3 666.1 627.6 666.5Z" fill="#a6d587" stroke="#666666" stroke-width="0.8"/><path d="M631.9 637.4 632.0 639.2 630.5 639.9 629.7 637.9 631.9 637.4Z" fill="#c3e4a3" stroke="#666666" stroke-width="0.8"/></g></svg></div><!--/map--></div><!--/charts-->

<!-- bottom tabs -->
<div class="a" style="left:4px;top:821px;width:1227px;height:1px;background:#f4ece4"></div>
<div class="a" style="left:4px;top:822px;width:1227px;height:30px;background:#e6e6e6;border-top:1px solid #b8b8c0"></div>
<div class="tab" style="left:4px;width:121px;background:#e6e6e6;border-right:1px solid #888"><svg style="left:8px;top:7px" width="12" height="15" viewBox="0 0 12 15"><path d="M1 3Q1 1 6 1Q11 1 11 3V12Q11 14 6 14Q1 14 1 12Z" fill="#fff" stroke="#5a78a8" stroke-width="1.2"/><path d="M1.5 3.5Q6 5.5 10.5 3.5" stroke="#5a78a8" fill="none" stroke-width="0.9"/></svg><span style="left:23px;color:#606060">Data Source</span></div>
<div class="tab" style="left:125px;width:73px"><span style="left:6px">geocoded</span></div>
<div class="tab" style="left:198px;width:72px"><span style="left:5px">bar chart</span></div>
<div class="tab" style="left:270px;width:74px"><span style="left:5px">emp totals</span></div>
<div class="tab" style="left:344px;width:102px;background:#fff;border-right:1px solid #404040;color:#404040"><svg style="left:6px;top:10px" width="12" height="10" viewBox="0 0 12 10"><rect x="0.5" y="0.5" width="11" height="9" fill="none" stroke="#5a6a88"/><path d="M0.5 5h11M6 0.5v9" stroke="#5a6a88"/></svg><span style="left:23px;font-weight:bold;font-size:11.5px;color:#404040">Dashboard 1</span></div>
<svg style="left:453px;top:830px" width="17" height="15" viewBox="0 0 17 15"><path d="M3 0v6M0 3h6" stroke="#3a70c8" stroke-width="1.8"/><rect x="0.5" y="5.5" width="15" height="9" fill="none" stroke="#5a6a88"/><rect x="4" y="8" width="2" height="6.5" fill="#5a6a88"/><rect x="8" y="9" width="2" height="5.5" fill="#5a6a88"/><rect x="12" y="7" width="2" height="7.5" fill="#5a6a88"/></svg>
<svg style="left:485px;top:830px" width="17" height="15" viewBox="0 0 17 15"><path d="M3 0v6M0 3h6" stroke="#3a70c8" stroke-width="1.8"/><rect x="0.5" y="4.5" width="15" height="10" fill="none" stroke="#5a6a88"/><path d="M0.5 9.5h15M8 4.5v10" stroke="#5a6a88"/></svg>
<svg style="left:517px;top:830px" width="17" height="15" viewBox="0 0 17 15"><path d="M3 0v6M0 3h6" stroke="#3a70c8" stroke-width="1.8"/><path d="M1.5 5.5h5l1.5 1 1.5-1h5v9h-5l-1.5 0.5-1.5-0.5h-5z" fill="none" stroke="#5a6a88"/><path d="M8 6.5v8" stroke="#5a6a88"/></svg>
<!-- status bar -->
<div class="a" style="left:4px;top:852px;width:1227px;height:21px;background:#d4d0c8;border-top:1px solid #a0a0a0"></div>
<div class="t" style="left:7px;top:858px">21 marks</div>
<div class="t" style="left:71px;top:858px">1 row by 1 column</div>
<div class="t" style="left:179px;top:858px">SUM(Orderprice): 1,354,459</div>
<div class="a" style="left:991px;top:854px;width:1px;height:18px;background:#e8e4dc"></div>
<div class="a" style="left:1018px;top:854px;width:1px;height:18px;background:#e8e4dc"></div>
<div class="a" style="left:1045px;top:854px;width:1px;height:18px;background:#e8e4dc"></div>
<div class="a" style="left:1093px;top:854px;width:1px;height:18px;background:#e8e4dc"></div>
<div class="a" style="left:1163px;top:854px;width:1px;height:18px;background:#e8e4dc"></div>
<svg style="left:1100px;top:856px" width="56" height="10" viewBox="0 0 56 10"><g fill="#a8a8b0"><rect x="0" y="1" width="1" height="8"/><path d="M7 1v8L2 5z"/><path d="M22 1v8L17 5z"/><path d="M33 1v8L38 5z"/><path d="M49 1v8L54 5z"/><rect x="55" y="1" width="1" height="8"/></g></svg>
<svg style="left:1171px;top:856px" width="12" height="12" viewBox="0 0 12 12"><g fill="#b4b0b4"><rect x="0" y="0" width="3" height="3"/><rect x="4.5" y="0" width="3" height="3"/><rect x="9" y="0" width="3" height="3"/><rect x="0" y="4.5" width="3" height="3"/><rect x="4.5" y="4.5" width="3" height="3"/><rect x="9" y="4.5" width="3" height="3"/><rect x="0" y="9" width="3" height="3"/><rect x="4.5" y="9" width="3" height="3"/><rect x="9" y="9" width="3" height="3"/></g></svg>
<svg style="left:1193px;top:856px" width="12" height="12" viewBox="0 0 12 12"><g fill="#b4b0b4"><rect x="0" y="0" width="12" height="6"/><rect x="0" y="8" width="3" height="4"/><rect x="4.5" y="8" width="3" height="4"/><rect x="9" y="8" width="3" height="4"/></g></svg>
<div class="a" style="left:1214px;top:856px;width:11px;height:11px;background:#454545"></div>

</body></html>
